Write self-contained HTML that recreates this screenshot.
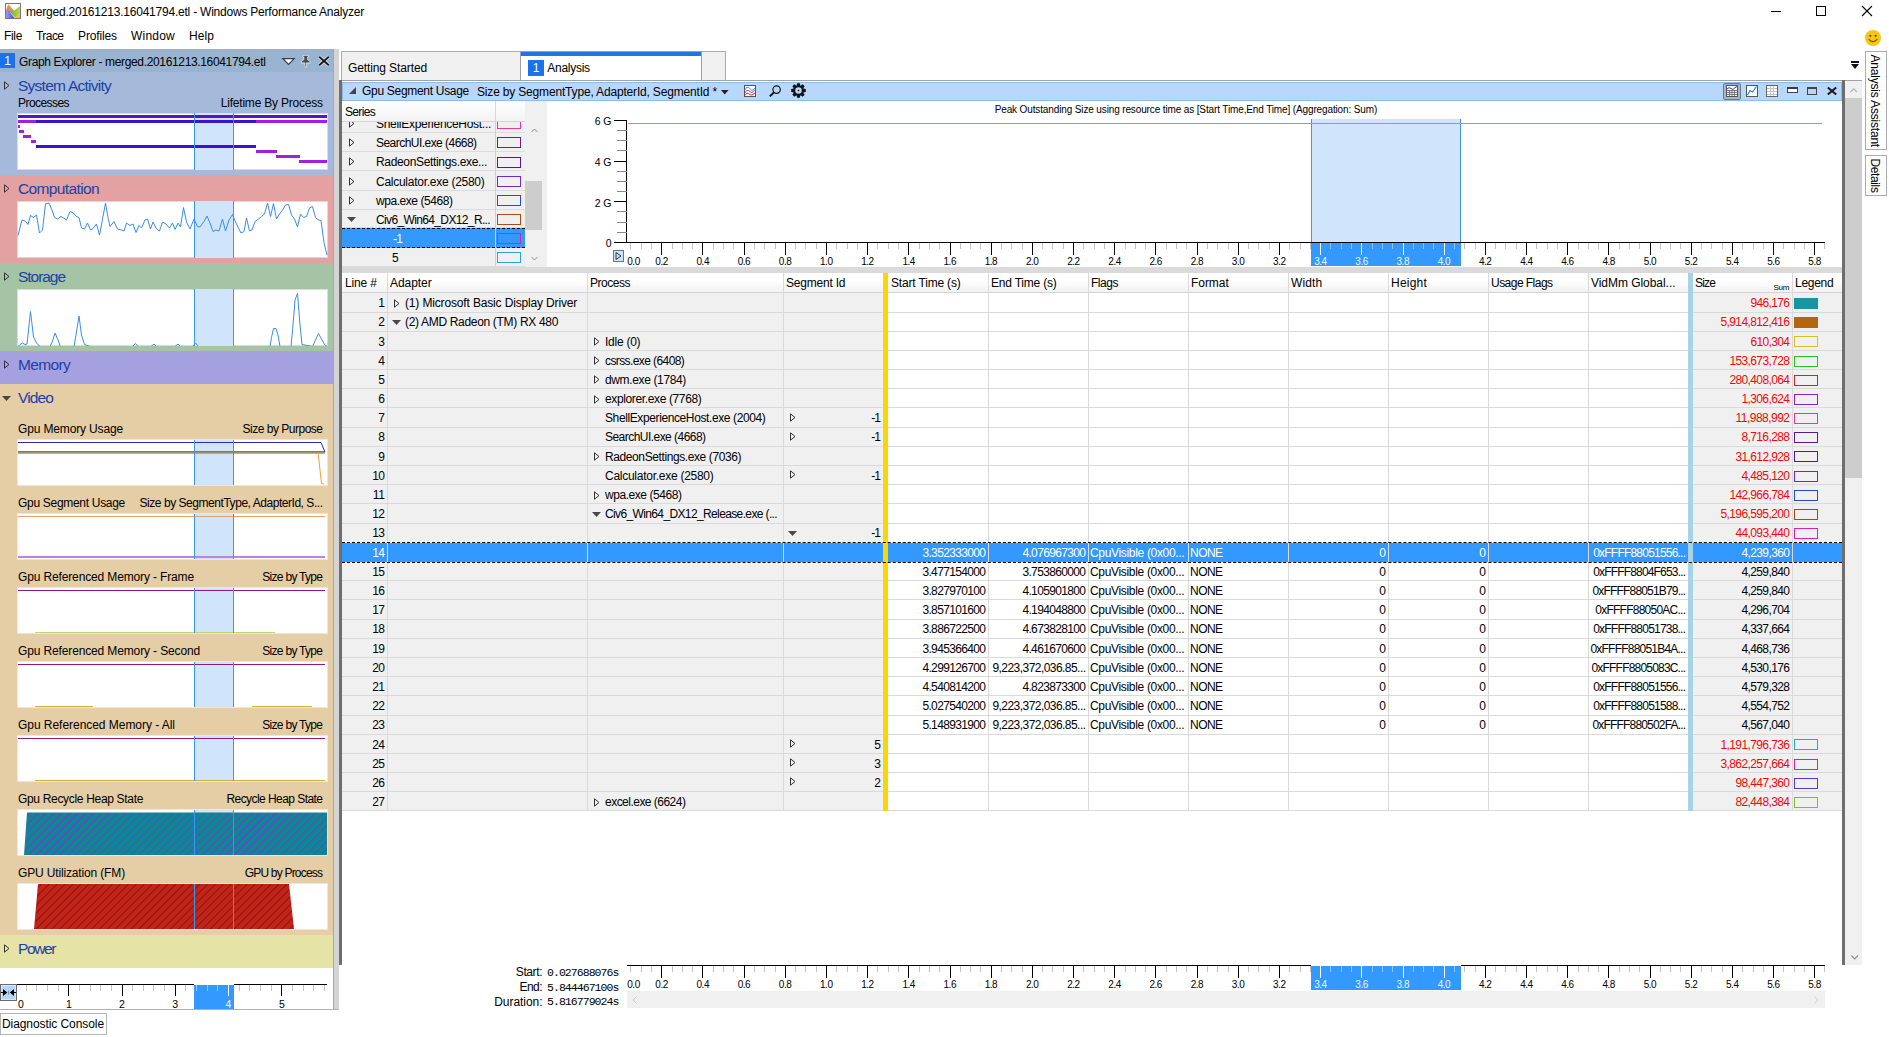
<!DOCTYPE html>
<html><head><meta charset="utf-8"><title>merged.20161213.16041794.etl - Windows Performance Analyzer</title>
<style>
html,body{margin:0;padding:0;background:#fff;}
html{overflow:hidden;width:1889px;height:1037px;}
body{width:1889px;height:1037px;position:relative;overflow:hidden;font-family:"Liberation Sans",sans-serif;font-size:12px;color:#000;}
div{position:absolute;box-sizing:border-box;}
svg{position:absolute;overflow:visible;}
.t{white-space:nowrap;}
.mono{font-family:"Liberation Mono",monospace;}
</style></head><body>

<svg style="left:5px;top:3px" width="16" height="16" viewBox="0 0 16 16">
<defs><linearGradient id="ib" x1="0" x2="1"><stop offset="0" stop-color="#9a9aff"/><stop offset="1" stop-color="#4a4ad0"/></linearGradient>
<linearGradient id="ig" x1="0" x2="1"><stop offset="0" stop-color="#7aa838"/><stop offset="1" stop-color="#b0dc50"/></linearGradient></defs>
<rect x="0.5" y="0.5" width="15" height="15" fill="#fff" stroke="#777"/>
<path d="M1 7L3.2 1.2L9.5 8L1 11Z" fill="#e09450"/>
<path d="M15 3L9 7.8L4.2 8L10 14.5L15 10.5Z" fill="url(#ig)"/>
<path d="M15 10.5L9 15L15 15Z" fill="#f0c030"/>
<path d="M1 15L1 8L2.5 6L9.5 15Z" fill="url(#ib)"/>
</svg>
<div class="t title" style="top:4.00px;height:16px;line-height:16px;font-size:12px;letter-spacing:-0.218px;left:26px;">merged.20161213.16041794.etl - Windows Performance Analyzer</div>
<div style="left:1771px;top:11px;width:10px;height:1px;background:#000;"></div>
<div style="left:1816px;top:6px;width:10px;height:10px;border:1px solid #000;"></div>
<svg style="left:1862px;top:6px" width="10" height="10" viewBox="0 0 10 10"><path d="M0 0L10 10M10 0L0 10" stroke="#000" stroke-width="1.1" fill="none"/></svg>
<div class="t menu" style="top:27.50px;height:16px;line-height:16px;font-size:12px;letter-spacing:-0.334px;left:4px;">File</div>
<div class="t menu" style="top:27.50px;height:16px;line-height:16px;font-size:12px;letter-spacing:-0.546px;left:36px;">Trace</div>
<div class="t menu" style="top:27.50px;height:16px;line-height:16px;font-size:12px;letter-spacing:-0.127px;left:78px;">Profiles</div>
<div class="t menu" style="top:27.50px;height:16px;line-height:16px;font-size:12px;letter-spacing:0.22px;left:131px;">Window</div>
<div class="t menu" style="top:27.50px;height:16px;line-height:16px;font-size:12px;letter-spacing:0.08px;left:189px;">Help</div>
<svg style="left:1865px;top:30px" width="16" height="16" viewBox="0 0 16 16">
<circle cx="8" cy="8" r="8" fill="#f9c513"/>
<circle cx="5.3" cy="5.8" r="1.1" fill="#6b4e00"/><circle cx="10.7" cy="5.8" r="1.1" fill="#6b4e00"/>
<path d="M3.6 9.2Q8 14 12.4 9.2" stroke="#6b4e00" stroke-width="1.1" fill="none"/></svg>
<div style="left:0px;top:49px;width:333px;height:23px;background:#99b4d1;"></div>
<div style="left:0px;top:53px;width:15px;height:15px;background:#1a73e8;"></div>
<div class="t" style="top:52.50px;height:16px;line-height:16px;font-size:12px;color:#fff;letter-spacing:-0.674px;left:-292.84px;width:600px;text-align:center;">1</div>
<div class="t ge" style="top:53.50px;height:16px;line-height:16px;font-size:12px;letter-spacing:-0.349px;left:19px;">Graph Explorer - merged.20161213.16041794.etl</div>
<div style="left:0px;top:49px;width:333px;height:1px;background:#a9adb3;"></div>
<svg style="left:282px;top:58px" width="13" height="7" viewBox="0 0 13 7"><path d="M0.8 0.6H12.2L6.5 6.3Z" fill="#fff" stroke="#3a3a52" stroke-width="1.2" stroke-linejoin="miter"/></svg>
<svg style="left:300px;top:55px" width="11" height="13" viewBox="0 0 11 13"><path d="M3.5 0.8H8V1.8H7.2V4.8L9.8 6.8V7.6H6.1V11L5.7 12L5.3 11V7.6H1.6V6.8L4.3 4.8V1.8H3.5Z" fill="#4a4a4a" stroke="#dfe8f2" stroke-width="1.6" paint-order="stroke" stroke-linejoin="round"/></svg>
<svg style="left:318px;top:56px" width="12" height="10" viewBox="0 0 12 10"><path d="M1.2 0.8L10.8 9.2M10.8 0.8L1.2 9.2" stroke="#e4ecf4" stroke-width="3.4" fill="none"/><path d="M1.2 0.8L10.8 9.2M10.8 0.8L1.2 9.2" stroke="#1a1a1a" stroke-width="1.9" fill="none"/></svg>
<div style="left:0px;top:72px;width:333px;height:103px;background:#a5b9db;"></div>
<svg style="left:3.7px;top:81.1px" width="6" height="9" viewBox="0 0 6 9"><path d="M0.5 0.8L5 4.5L0.5 8.2Z" fill="none" stroke="#333" stroke-width="1"/></svg>
<div class="t sect" style="top:76.35px;height:19.5px;line-height:19.5px;font-size:15.5px;color:#1d40a8;letter-spacing:-0.748px;left:18px;">System Activity</div>
<div class="t" style="top:95.00px;height:16px;line-height:16px;font-size:12px;letter-spacing:-0.558px;left:18px;">Processes</div>
<div class="t" style="top:95.00px;height:16px;line-height:16px;font-size:12px;letter-spacing:-0.213px;right:1566.21px;text-align:right;">Lifetime By Process</div>
<div style="left:17px;top:113px;width:311px;height:57px;background:#fff;background-clip:padding-box;border:1px solid rgba(255,255,255,0.5);"></div>
<div style="left:194px;top:113px;width:40px;height:57px;background:#d0e5fc;"></div>
<div style="left:18px;top:115px;width:309px;height:3px;background:#5a12c4;"></div>
<div style="left:18px;top:120px;width:18px;height:3px;background:#a21fe0;"></div>
<div style="left:36px;top:120px;width:220px;height:3px;background:#3912d2;"></div>
<div style="left:256px;top:120px;width:71px;height:3px;background:#a21fe0;"></div>
<div style="left:18px;top:125px;width:2px;height:3px;background:#a21fe0;"></div>
<div style="left:19px;top:130px;width:5px;height:3px;background:#a21fe0;"></div>
<div style="left:23px;top:135px;width:8px;height:3px;background:#a21fe0;"></div>
<div style="left:31px;top:140px;width:5px;height:3px;background:#a21fe0;"></div>
<div style="left:36px;top:145px;width:220px;height:3px;background:#3912d2;"></div>
<div style="left:256px;top:150px;width:21px;height:3px;background:#a21fe0;"></div>
<div style="left:276px;top:155px;width:24px;height:3px;background:#a21fe0;"></div>
<div style="left:299px;top:160px;width:28px;height:3px;background:#a21fe0;"></div>
<div style="left:194px;top:113px;width:40px;height:57px;border-left:1px solid #3d96f0;border-right:1px solid #3d96f0;"></div>
<div style="left:0px;top:175px;width:333px;height:88px;background:#e3a1a1;"></div>
<svg style="left:3.7px;top:184.1px" width="6" height="9" viewBox="0 0 6 9"><path d="M0.5 0.8L5 4.5L0.5 8.2Z" fill="none" stroke="#333" stroke-width="1"/></svg>
<div class="t sect" style="top:179.35px;height:19.5px;line-height:19.5px;font-size:15.5px;color:#1d40a8;letter-spacing:-0.626px;left:18px;">Computation</div>
<div style="left:17px;top:201px;width:311px;height:57px;background:#fff;background-clip:padding-box;border:1px solid rgba(255,255,255,0.5);"></div>
<div style="left:194px;top:201px;width:40px;height:57px;background:#d0e5fc;"></div>
<svg style="left:0;top:0" width="334" height="300"><polyline points="18.0,235.5 22.0,220.0 25.5,221.2 28.0,224.5 30.5,215.5 33.5,217.5 36.5,215.0 39.5,233.0 42.5,230.0 45.5,203.8 49.0,203.0 52.0,210.0 54.5,217.5 57.5,219.0 61.0,216.5 63.5,218.0 66.5,220.0 70.0,211.5 73.5,213.0 76.5,216.5 79.0,217.5 81.5,228.0 84.5,229.0 87.5,223.0 90.5,230.0 93.5,228.0 96.5,224.0 99.5,235.0 103.0,216.5 105.5,203.0 108.0,217.5 110.0,226.5 114.0,221.5 117.5,229.0 121.5,230.0 124.0,231.0 126.5,223.0 130.0,225.5 133.0,224.0 136.0,232.5 139.0,225.5 141.5,228.0 145.0,220.0 147.5,219.0 150.5,229.0 153.0,222.0 156.5,229.0 159.5,231.0 162.5,222.0 166.0,224.0 169.5,228.0 172.5,223.0 175.0,229.5 178.0,223.0 180.5,227.0 183.5,207.5 186.5,222.0 190.0,229.0 194.0,219.0 197.5,226.5 200.0,227.0 204.0,221.5 207.0,216.0 210.0,223.0 213.0,231.5 216.0,230.0 219.0,231.0 222.5,219.0 225.5,231.0 229.0,220.0 232.5,214.5 235.5,222.0 239.0,229.0 241.0,233.0 244.0,231.5 246.5,218.0 249.5,231.0 252.0,230.0 255.0,221.5 258.5,219.0 261.5,216.5 264.5,214.0 267.5,203.0 270.5,216.5 273.5,203.5 276.5,219.0 279.5,214.0 282.5,210.0 285.5,205.0 288.5,204.5 291.5,215.0 294.5,219.0 297.5,227.0 300.5,214.0 303.5,217.5 306.5,216.5 309.5,208.0 312.5,206.5 315.5,217.5 318.5,220.0 321.0,220.5 324.0,242.5 327.0,255.0" fill="none" stroke="#3c8ce6" stroke-width="1"/></svg>
<div style="left:194px;top:201px;width:40px;height:57px;border-left:1px solid #3d96f0;border-right:1px solid #3d96f0;"></div>
<div style="left:0px;top:263px;width:333px;height:88px;background:#a5c3a5;"></div>
<svg style="left:3.7px;top:272.1px" width="6" height="9" viewBox="0 0 6 9"><path d="M0.5 0.8L5 4.5L0.5 8.2Z" fill="none" stroke="#333" stroke-width="1"/></svg>
<div class="t sect" style="top:267.35px;height:19.5px;line-height:19.5px;font-size:15.5px;color:#1d40a8;letter-spacing:-1.041px;left:18px;">Storage</div>
<div style="left:17px;top:289px;width:311px;height:57px;background:#fff;background-clip:padding-box;border:1px solid rgba(255,255,255,0.5);"></div>
<div style="left:194px;top:289px;width:40px;height:57px;background:#d0e5fc;"></div>
<svg style="left:17px;top:289px;overflow:hidden" width="311" height="57"><polyline points="1.0,57.5 3.0,55.5 5.5,54.0 8.0,55.5 10.0,55.0 13.5,22.5 16.5,48.0 19.5,54.0 23.0,57.5 33.0,57.5 35.0,53.5 38.0,44.0 41.0,51.0 43.5,57.5 57.0,57.5 59.0,46.0 62.0,27.0 64.5,46.0 67.5,55.5 73.0,57.5 115.5,57.5 118.5,54.5 121.0,57.5 134.0,57.5 137.0,55.0 139.5,57.5 158.0,57.5 161.0,55.0 163.5,57.5 175.5,57.5 178.5,54.0 181.5,57.5 253.0,57.5 254.5,48.5 256.5,39.5 259.0,39.5 261.0,46.0 263.0,57.5 274.0,57.5 276.0,36.0 278.0,11.0 280.5,4.5 283.0,36.0 285.0,55.5 295.5,57.5 298.5,51.0 301.5,44.5 304.5,50.0 307.5,55.5 310.0,57.5" fill="none" stroke="#3c8ce6" stroke-width="1"/></svg>
<div style="left:194px;top:289px;width:40px;height:57px;border-left:1px solid #3d96f0;border-right:1px solid #3d96f0;"></div>
<div style="left:0px;top:351px;width:333px;height:33px;background:#a5a1e1;"></div>
<svg style="left:3.7px;top:360.1px" width="6" height="9" viewBox="0 0 6 9"><path d="M0.5 0.8L5 4.5L0.5 8.2Z" fill="none" stroke="#333" stroke-width="1"/></svg>
<div class="t sect" style="top:355.35px;height:19.5px;line-height:19.5px;font-size:15.5px;color:#1d40a8;letter-spacing:-0.663px;left:18px;">Memory</div>
<div style="left:0px;top:384px;width:333px;height:551px;background:#e5cda5;"></div>
<svg style="left:2px;top:395.5px" width="9" height="5" viewBox="0 0 9 5"><path d="M0 0H9L4.5 5Z" fill="#484848"/></svg>
<div class="t sect" style="top:388.35px;height:19.5px;line-height:19.5px;font-size:15.5px;color:#1d40a8;letter-spacing:-0.873px;left:18px;">Video</div>
<div class="t" style="top:421.40px;height:16px;line-height:16px;font-size:12px;letter-spacing:-0.148px;left:18px;">Gpu Memory Usage</div>
<div class="t" style="top:421.40px;height:16px;line-height:16px;font-size:12px;letter-spacing:-0.492px;right:1566.49px;text-align:right;">Size by Purpose</div>
<div style="left:17px;top:439px;width:311px;height:47px;background:#fff;background-clip:padding-box;border:1px solid rgba(255,255,255,0.5);"></div>
<div style="left:194px;top:440px;width:40px;height:45px;background:#d0e5fc;"></div>
<svg style="left:0;top:440px" width="334" height="45"><polyline points="18,12.9 325,12.9" fill="none" stroke="#a0946c" stroke-width="1.7"/><polyline points="18,11.5 325,11.5" fill="none" stroke="#2a9a9a" stroke-width="1.2"/><polyline points="18,2.5 321,2.5 325,12" fill="none" stroke="#2a2ab8" stroke-width="1"/><polyline points="318,12 321.5,43.5 324,44" fill="none" stroke="#f0a030" stroke-width="1"/></svg>
<div style="left:194px;top:440px;width:40px;height:45px;border-left:1px solid #3d96f0;border-right:1px solid #3d96f0;"></div>
<div class="t" style="top:495.40px;height:16px;line-height:16px;font-size:12px;letter-spacing:-0.298px;left:18px;">Gpu Segment Usage</div>
<div class="t" style="top:495.40px;height:16px;line-height:16px;font-size:12px;letter-spacing:-0.457px;right:1566.46px;text-align:right;">Size by SegmentType, AdapterId, S...</div>
<div style="left:17px;top:513px;width:311px;height:47px;background:#fff;background-clip:padding-box;border:1px solid rgba(255,255,255,0.5);"></div>
<div style="left:194px;top:514px;width:40px;height:45px;background:#d0e5fc;"></div>
<div style="left:18px;top:516px;width:307px;height:1px;background:#e8a468;"></div>
<div style="left:18px;top:556px;width:307px;height:1.5px;background:#c080e8;"></div>
<div style="left:194px;top:514px;width:40px;height:45px;border-left:1px solid #3d96f0;border-right:1px solid #3d96f0;"></div>
<div class="t" style="top:569.40px;height:16px;line-height:16px;font-size:12px;letter-spacing:-0.14px;left:18px;">Gpu Referenced Memory - Frame</div>
<div class="t" style="top:569.40px;height:16px;line-height:16px;font-size:12px;letter-spacing:-0.707px;right:1566.71px;text-align:right;">Size by Type</div>
<div style="left:17px;top:587px;width:311px;height:47px;background:#fff;background-clip:padding-box;border:1px solid rgba(255,255,255,0.5);"></div>
<div style="left:194px;top:588px;width:40px;height:45px;background:#d0e5fc;"></div>
<div style="left:18px;top:590px;width:307px;height:1px;background:#8a1a8a;"></div>
<div style="left:35px;top:632.4px;width:240px;height:0.6px;background:#b8d878;"></div>
<div style="left:194px;top:588px;width:40px;height:45px;border-left:1px solid #3d96f0;border-right:1px solid #3d96f0;"></div>
<div class="t" style="top:643.40px;height:16px;line-height:16px;font-size:12px;letter-spacing:-0.136px;left:18px;">Gpu Referenced Memory - Second</div>
<div class="t" style="top:643.40px;height:16px;line-height:16px;font-size:12px;letter-spacing:-0.707px;right:1566.71px;text-align:right;">Size by Type</div>
<div style="left:17px;top:661px;width:311px;height:47px;background:#fff;background-clip:padding-box;border:1px solid rgba(255,255,255,0.5);"></div>
<div style="left:194px;top:662px;width:40px;height:45px;background:#d0e5fc;"></div>
<div style="left:18px;top:664px;width:307px;height:1px;background:#8a1a8a;"></div>
<div style="left:35px;top:706.3px;width:58px;height:0.7px;background:#d0b040;"></div>
<div style="left:252px;top:706.3px;width:60px;height:0.7px;background:#d0b040;"></div>
<div style="left:194px;top:662px;width:40px;height:45px;border-left:1px solid #3d96f0;border-right:1px solid #3d96f0;"></div>
<div class="t" style="top:717.40px;height:16px;line-height:16px;font-size:12px;letter-spacing:-0.04px;left:18px;">Gpu Referenced Memory - All</div>
<div class="t" style="top:717.40px;height:16px;line-height:16px;font-size:12px;letter-spacing:-0.707px;right:1566.71px;text-align:right;">Size by Type</div>
<div style="left:17px;top:735px;width:311px;height:47px;background:#fff;background-clip:padding-box;border:1px solid rgba(255,255,255,0.5);"></div>
<div style="left:194px;top:736px;width:40px;height:45px;background:#d0e5fc;"></div>
<div style="left:18px;top:738px;width:307px;height:1px;background:#8a1a8a;"></div>
<div style="left:35px;top:780.3px;width:290px;height:0.7px;background:#d0b040;"></div>
<div style="left:194px;top:736px;width:40px;height:45px;border-left:1px solid #3d96f0;border-right:1px solid #3d96f0;"></div>
<div class="t" style="top:791.40px;height:16px;line-height:16px;font-size:12px;letter-spacing:-0.321px;left:18px;">Gpu Recycle Heap State</div>
<div class="t" style="top:791.40px;height:16px;line-height:16px;font-size:12px;letter-spacing:-0.559px;right:1566.56px;text-align:right;">Recycle Heap State</div>
<div style="left:17px;top:809px;width:311px;height:47px;background:#fff;background-clip:padding-box;border:1px solid rgba(255,255,255,0.5);"></div>
<div style="left:194px;top:810px;width:40px;height:45px;background:#d0e5fc;"></div>
<svg style="left:17px;top:810px" width="311" height="45"><defs><pattern id="h1" width="5.6" height="5.6" patternUnits="userSpaceOnUse" patternTransform="rotate(45)"><rect width="5.6" height="5.6" fill="#058c8c"/><rect width="1" height="5.6" fill="#8a2be2"/></pattern></defs><polygon points="7,45 10,2.5 310,2.5 310,45" fill="url(#h1)"/></svg>
<div style="left:194px;top:810px;width:40px;height:45px;border-left:1px solid #3d96f0;border-right:1px solid #3d96f0;"></div>
<div class="t" style="top:865.40px;height:16px;line-height:16px;font-size:12px;letter-spacing:-0.151px;left:18px;">GPU Utilization (FM)</div>
<div class="t" style="top:865.40px;height:16px;line-height:16px;font-size:12px;letter-spacing:-0.8px;right:1566.8px;text-align:right;">GPU by Process</div>
<div style="left:17px;top:883px;width:311px;height:47px;background:#fff;background-clip:padding-box;border:1px solid rgba(255,255,255,0.5);"></div>
<div style="left:194px;top:884px;width:40px;height:45px;background:#d0e5fc;"></div>
<svg style="left:17px;top:884px" width="311" height="45"><defs><pattern id="h2" width="5.6" height="5.6" patternUnits="userSpaceOnUse" patternTransform="rotate(45)"><rect width="5.6" height="5.6" fill="#c22418"/><rect width="1" height="5.6" fill="#8a1212"/></pattern></defs><polygon points="17,45 21,0 272,0 277,45" fill="url(#h2)"/></svg>
<div style="left:194px;top:884px;width:40px;height:45px;border-left:1px solid #3d96f0;border-right:1px solid #3d96f0;"></div>
<div style="left:0px;top:935px;width:333px;height:33px;background:#e5e3a5;"></div>
<svg style="left:3.7px;top:944.1px" width="6" height="9" viewBox="0 0 6 9"><path d="M0.5 0.8L5 4.5L0.5 8.2Z" fill="none" stroke="#333" stroke-width="1"/></svg>
<div class="t sect" style="top:939.35px;height:19.5px;line-height:19.5px;font-size:15.5px;color:#1d40a8;letter-spacing:-1.387px;left:18px;">Power</div>
<div style="left:0px;top:984px;width:17px;height:17px;background:#b5d5fb;border:1px solid #6a6a6a;box-shadow:inset 0 0 0 1px #d8e8fc;"></div>
<svg style="left:0px;top:984px" width="17" height="17" viewBox="0 0 17 17"><path d="M3 5L7.3 8.5L3 12ZM14 5L9.8 8.5L14 12Z" fill="#000"/><path d="M1 8.5H4M13 8.5H16" stroke="#000" stroke-width="1.2" fill="none"/><path d="M8.5 6.5V10.5" stroke="#777" stroke-width="0.8"/></svg>
<div style="left:194px;top:985px;width:40px;height:24px;background:#3399ff;"></div>
<svg shape-rendering="crispEdges" style="left:0;top:0" width="334" height="1037"><line x1="26.5" y1="985" x2="26.5" y2="991" stroke="#c4c4c4" stroke-width="1"/><line x1="36.5" y1="985" x2="36.5" y2="991" stroke="#c4c4c4" stroke-width="1"/><line x1="47.5" y1="985" x2="47.5" y2="991" stroke="#c4c4c4" stroke-width="1"/><line x1="58.5" y1="985" x2="58.5" y2="991" stroke="#c4c4c4" stroke-width="1"/><line x1="68.5" y1="984" x2="68.5" y2="996" stroke="#000" stroke-width="1"/><line x1="79.5" y1="985" x2="79.5" y2="991" stroke="#c4c4c4" stroke-width="1"/><line x1="90.5" y1="985" x2="90.5" y2="991" stroke="#c4c4c4" stroke-width="1"/><line x1="100.5" y1="985" x2="100.5" y2="991" stroke="#c4c4c4" stroke-width="1"/><line x1="111.5" y1="985" x2="111.5" y2="991" stroke="#c4c4c4" stroke-width="1"/><line x1="122.5" y1="984" x2="122.5" y2="996" stroke="#000" stroke-width="1"/><line x1="132.5" y1="985" x2="132.5" y2="991" stroke="#c4c4c4" stroke-width="1"/><line x1="143.5" y1="985" x2="143.5" y2="991" stroke="#c4c4c4" stroke-width="1"/><line x1="153.5" y1="985" x2="153.5" y2="991" stroke="#c4c4c4" stroke-width="1"/><line x1="164.5" y1="985" x2="164.5" y2="991" stroke="#c4c4c4" stroke-width="1"/><line x1="175.5" y1="984" x2="175.5" y2="996" stroke="#000" stroke-width="1"/><line x1="185.5" y1="985" x2="185.5" y2="991" stroke="#c4c4c4" stroke-width="1"/><line x1="196.5" y1="985" x2="196.5" y2="991" stroke="#8cc4ff" stroke-width="1"/><line x1="207.5" y1="985" x2="207.5" y2="991" stroke="#8cc4ff" stroke-width="1"/><line x1="217.5" y1="985" x2="217.5" y2="991" stroke="#8cc4ff" stroke-width="1"/><line x1="228.5" y1="984" x2="228.5" y2="996" stroke="#fff" stroke-width="1"/><line x1="239.5" y1="985" x2="239.5" y2="991" stroke="#c4c4c4" stroke-width="1"/><line x1="249.5" y1="985" x2="249.5" y2="991" stroke="#c4c4c4" stroke-width="1"/><line x1="260.5" y1="985" x2="260.5" y2="991" stroke="#c4c4c4" stroke-width="1"/><line x1="271.5" y1="985" x2="271.5" y2="991" stroke="#c4c4c4" stroke-width="1"/><line x1="281.5" y1="984" x2="281.5" y2="996" stroke="#000" stroke-width="1"/><line x1="292.5" y1="985" x2="292.5" y2="991" stroke="#c4c4c4" stroke-width="1"/><line x1="303.5" y1="985" x2="303.5" y2="991" stroke="#c4c4c4" stroke-width="1"/><line x1="313.5" y1="985" x2="313.5" y2="991" stroke="#c4c4c4" stroke-width="1"/><line x1="324.5" y1="985" x2="324.5" y2="991" stroke="#c4c4c4" stroke-width="1"/><line x1="17" y1="984.5" x2="194" y2="984.5" stroke="#000" stroke-width="1"/><line x1="234" y1="984.5" x2="327" y2="984.5" stroke="#000" stroke-width="1"/></svg>
<div class="t ax" style="top:996.55px;height:14.5px;line-height:14.5px;font-size:10.5px;letter-spacing:-0.44px;left:18px;">0</div>
<div class="t ax" style="top:996.55px;height:14.5px;line-height:14.5px;font-size:10.5px;letter-spacing:-0.44px;left:-231.42px;width:600px;text-align:center;">1</div>
<div class="t ax" style="top:996.55px;height:14.5px;line-height:14.5px;font-size:10.5px;letter-spacing:-0.44px;left:-178.22px;width:600px;text-align:center;">2</div>
<div class="t ax" style="top:996.55px;height:14.5px;line-height:14.5px;font-size:10.5px;letter-spacing:-0.44px;left:-125.02px;width:600px;text-align:center;">3</div>
<div class="t ax" style="top:996.55px;height:14.5px;line-height:14.5px;font-size:10.5px;color:#fff;letter-spacing:-0.44px;left:-71.72px;width:600px;text-align:center;">4</div>
<div class="t ax" style="top:996.55px;height:14.5px;line-height:14.5px;font-size:10.5px;letter-spacing:-0.44px;left:-18.42px;width:600px;text-align:center;">5</div>
<div style="left:333px;top:49px;width:1px;height:961px;background:#a8a8a8;"></div>
<div style="left:334px;top:49px;width:5px;height:961px;background:#d4d4d4;"></div>
<div style="left:0px;top:1009px;width:339px;height:1px;background:#b0b0b0;"></div>
<div style="left:0px;top:1013px;width:107px;height:22px;border:1px solid #b4b4b4;background:#fff;"></div>
<div class="t dc" style="top:1016.00px;height:16px;line-height:16px;font-size:12px;letter-spacing:-0.077px;left:2px;">Diagnostic Console</div>
<div style="left:341px;top:51px;width:385px;height:30px;background:#f0f0f0;border:1px solid #acacac;"></div>
<div style="left:520px;top:51px;width:1px;height:30px;background:#acacac;"></div>
<div style="left:520px;top:51px;width:182px;height:30px;background:#fff;border:1px solid #a0a0a0;border-bottom:none;"></div>
<div style="left:521px;top:52px;width:180px;height:3.6px;background:#1e74e4;"></div>
<div class="t tab" style="top:59.90px;height:16px;line-height:16px;font-size:12px;letter-spacing:-0.114px;left:348px;">Getting Started</div>
<div style="left:528px;top:60px;width:16px;height:16px;background:#1a73e8;"></div>
<div class="t" style="top:60.00px;height:16px;line-height:16px;font-size:12px;color:#fff;letter-spacing:-0.674px;left:235.66px;width:600px;text-align:center;">1</div>
<div class="t tab" style="top:59.90px;height:16px;line-height:16px;font-size:12px;letter-spacing:-0.273px;left:547.3px;">Analysis</div>
<div style="left:339px;top:80px;width:1523px;height:1.2px;background:#a2a2a2;"></div>
<div style="left:339px;top:80px;width:3px;height:885px;background:#6e6e6e;"></div>
<div style="left:1842px;top:80px;width:3px;height:885px;background:#6e6e6e;"></div>
<div style="left:1845px;top:81.2px;width:17px;height:883.8px;background:#f0f0f0;"></div>
<div style="left:1845px;top:98px;width:17px;height:380px;background:#cdcdcd;"></div>
<svg style="left:1850.3px;top:87.5px" width="7.4" height="4.7" viewBox="0 0 7.4 4.7"><path d="M0.4 4.2L3.7 0.8L7 4.2" stroke="#b0b0b0" stroke-width="1.1" fill="none"/></svg>
<svg style="left:1850.5px;top:954.5px" width="7.4" height="4.7" viewBox="0 0 7.4 4.7"><path d="M0.4 0.5L3.7 3.9L7 0.5" stroke="#8a8a8a" stroke-width="1.1" fill="none"/></svg>
<div style="left:342px;top:81.5px;width:1500px;height:19px;background:#b9d7fc;border:1px solid #8fbcf0;"></div>
<svg style="left:349px;top:87px" width="7" height="7" viewBox="0 0 7 7"><path d="M7 0V7H0Z" fill="#444"/></svg>
<div class="t hd1" style="top:83.00px;height:16px;line-height:16px;font-size:12px;letter-spacing:-0.298px;left:362px;">Gpu Segment Usage</div>
<div class="t hd2" style="top:83.50px;height:16px;line-height:16px;font-size:12px;letter-spacing:-0.174px;left:477px;">Size by SegmentType, AdapterId, SegmentId *</div>
<svg style="left:721px;top:89.7px" width="7.5" height="4.5" viewBox="0 0 7.5 4.5"><path d="M0 0H7.5L3.75 4.5Z" fill="#222"/></svg>
<svg style="left:744px;top:85px" width="12" height="12" viewBox="0 0 12 12"><rect x="0.5" y="0.5" width="11" height="11" fill="#fff" stroke="#555"/><path d="M1 5Q2.5 1 4.5 2.5T7.5 5T11 3" stroke="#20a0e8" fill="none" stroke-width="1"/><path d="M1 8Q2.5 4 4.5 5.5T7.5 7.5T11 4.5" stroke="#a040c0" fill="none" stroke-width="1"/><path d="M1 10.5Q2.5 7 4.5 8.5T7.5 10T11 8" stroke="#f01818" fill="none" stroke-width="1"/></svg>
<svg style="left:769px;top:84px" width="13" height="13" viewBox="0 0 13 13"><circle cx="7.6" cy="5.6" r="3.7" fill="none" stroke="#111" stroke-width="1.2"/><path d="M4.9 8.4L0.8 12.4" stroke="#111" stroke-width="2"/></svg>
<svg style="left:790.8px;top:83.3px" width="15" height="15" viewBox="-7.5 -7.5 15 15"><path d="M-1.4 -7.3H1.4L1.9 -4.6H-1.9Z" fill="#111" transform="rotate(0)"/><path d="M-1.4 -7.3H1.4L1.9 -4.6H-1.9Z" fill="#111" transform="rotate(45)"/><path d="M-1.4 -7.3H1.4L1.9 -4.6H-1.9Z" fill="#111" transform="rotate(90)"/><path d="M-1.4 -7.3H1.4L1.9 -4.6H-1.9Z" fill="#111" transform="rotate(135)"/><path d="M-1.4 -7.3H1.4L1.9 -4.6H-1.9Z" fill="#111" transform="rotate(180)"/><path d="M-1.4 -7.3H1.4L1.9 -4.6H-1.9Z" fill="#111" transform="rotate(225)"/><path d="M-1.4 -7.3H1.4L1.9 -4.6H-1.9Z" fill="#111" transform="rotate(270)"/><path d="M-1.4 -7.3H1.4L1.9 -4.6H-1.9Z" fill="#111" transform="rotate(315)"/><circle r="4.25" fill="none" stroke="#111" stroke-width="2"/><path d="M0 -1L1 0L0 1L-1 0Z" fill="#111"/></svg>
<div style="left:1723px;top:82.5px;width:18px;height:17px;background:#a4b8d2;border:1.5px solid #727880;border-radius:2px;"></div>
<svg style="left:1726px;top:85px" width="12" height="12" viewBox="0 0 12 12"><rect x="0.5" y="0.5" width="11" height="11" fill="#fff" stroke="#555"/><path d="M1 4Q3 1.5 5 3.5T8.5 3L11 1.5" stroke="#2a3ad8" fill="none" stroke-width="1"/><rect x="1" y="5" width="10" height="6" fill="#fff"/><path d="M1 5.5H11M1 7.5H11M1 9.5H11M3.5 5.5V11M6 5.5V11M8.5 5.5V11" stroke="#777" stroke-width="1" fill="none"/></svg>
<svg style="left:1746px;top:85px" width="12" height="12" viewBox="0 0 12 12"><rect x="0.5" y="0.5" width="11" height="11" fill="#fff" stroke="#555"/><path d="M1.5 10L4 5.5L6.5 7L10.5 1.5" stroke="#1a8ae0" fill="none" stroke-width="1.2"/></svg>
<svg style="left:1766px;top:85px" width="12" height="12" viewBox="0 0 12 12"><rect x="0.5" y="0.5" width="11" height="11" fill="#fff" stroke="#666"/><path d="M1 3.5H11M1 6.5H11M1 9.5H11M4.5 1V11M7.5 1V11" stroke="#c4c4c4" stroke-width="1" fill="none" shape-rendering="crispEdges"/></svg>
<div style="left:1787px;top:87px;width:11px;height:5.5px;border:1px solid #444;border-top:2px solid #3a3a4a;background:#fff;"></div>
<div style="left:1807px;top:87px;width:10px;height:8px;border:1px solid #444;border-top:2px solid #444;background:#b9d7fc;"></div>
<svg style="left:1827px;top:87px" width="10" height="8" viewBox="0 0 10 8"><path d="M0.8 0.5L9.2 7.5M9.2 0.5L0.8 7.5" stroke="#1a1a1a" stroke-width="2.1" fill="none"/></svg>
<div style="left:1851px;top:61px;width:8px;height:2px;background:#111;"></div>
<svg style="left:1851px;top:64px" width="8" height="5" viewBox="0 0 8 5"><path d="M0 0H8L4 5Z" fill="#111"/></svg>
<div style="left:342px;top:100.5px;width:205px;height:166.5px;background:#f0f0f0;"></div>
<div style="left:342px;top:131.5px;width:183px;height:1px;background:#dcdcdc;"></div>
<div style="left:495px;top:113.5px;width:1px;height:19.0px;background:#d0d0d0;"></div>
<svg style="left:349px;top:118.6px" width="6" height="9" viewBox="0 0 6 9"><path d="M0.5 0.8L5 4.5L0.5 8.2Z" fill="none" stroke="#333" stroke-width="1"/></svg>
<div class="t ser" style="top:115.60px;height:16px;line-height:16px;font-size:12px;letter-spacing:-0.291px;left:376px;">ShellExperienceHost...</div>
<div style="left:497px;top:118.1px;width:24px;height:11px;border:1px solid #e8389c;"></div>
<div style="left:342px;top:151px;width:183px;height:1px;background:#dcdcdc;"></div>
<div style="left:495px;top:132.5px;width:1px;height:19.5px;background:#d0d0d0;"></div>
<svg style="left:349px;top:137.85px" width="6" height="9" viewBox="0 0 6 9"><path d="M0.5 0.8L5 4.5L0.5 8.2Z" fill="none" stroke="#333" stroke-width="1"/></svg>
<div class="t ser" style="top:134.85px;height:16px;line-height:16px;font-size:12px;letter-spacing:-0.538px;left:376px;">SearchUI.exe (4668)</div>
<div style="left:497px;top:137.35px;width:24px;height:11px;border:1px solid #6a1aa8;"></div>
<div style="left:342px;top:170.3px;width:183px;height:1px;background:#dcdcdc;"></div>
<div style="left:495px;top:152px;width:1px;height:19.30000000000001px;background:#d0d0d0;"></div>
<svg style="left:349px;top:157.25px" width="6" height="9" viewBox="0 0 6 9"><path d="M0.5 0.8L5 4.5L0.5 8.2Z" fill="none" stroke="#333" stroke-width="1"/></svg>
<div class="t ser" style="top:154.25px;height:16px;line-height:16px;font-size:12px;letter-spacing:-0.337px;left:376px;">RadeonSettings.exe...</div>
<div style="left:497px;top:156.75px;width:24px;height:11px;border:1px solid #4a1ab0;"></div>
<div style="left:342px;top:189.75px;width:183px;height:1px;background:#dcdcdc;"></div>
<div style="left:495px;top:171.3px;width:1px;height:19.44999999999999px;background:#d0d0d0;"></div>
<svg style="left:349px;top:176.625px" width="6" height="9" viewBox="0 0 6 9"><path d="M0.5 0.8L5 4.5L0.5 8.2Z" fill="none" stroke="#333" stroke-width="1"/></svg>
<div class="t ser" style="top:173.62px;height:16px;line-height:16px;font-size:12px;letter-spacing:-0.265px;left:376px;">Calculator.exe (2580)</div>
<div style="left:497px;top:176.125px;width:24px;height:11px;border:1px solid #6a2ad8;"></div>
<div style="left:342px;top:209px;width:183px;height:1px;background:#dcdcdc;"></div>
<div style="left:495px;top:190.75px;width:1px;height:19.25px;background:#d0d0d0;"></div>
<svg style="left:349px;top:195.975px" width="6" height="9" viewBox="0 0 6 9"><path d="M0.5 0.8L5 4.5L0.5 8.2Z" fill="none" stroke="#333" stroke-width="1"/></svg>
<div class="t ser" style="top:192.97px;height:16px;line-height:16px;font-size:12px;letter-spacing:-0.444px;left:376px;">wpa.exe (5468)</div>
<div style="left:497px;top:195.475px;width:24px;height:11px;border:1px solid #2a48d8;"></div>
<div style="left:342px;top:227.2px;width:183px;height:1px;background:#dcdcdc;"></div>
<div style="left:495px;top:210px;width:1px;height:18.19999999999999px;background:#d0d0d0;"></div>
<svg style="left:347px;top:217.2px" width="9" height="5" viewBox="0 0 9 5"><path d="M0 0H9L4.5 5Z" fill="#484848"/></svg>
<div class="t ser" style="top:211.70px;height:16px;line-height:16px;font-size:12px;letter-spacing:-0.636px;left:376px;">Civ6_Win64_DX12_R...</div>
<div style="left:497px;top:214.2px;width:24px;height:11px;border:1px solid #b04a18;"></div>
<div style="left:342px;top:228.2px;width:183px;height:19.400000000000006px;background:#3399ff;border-top:1px dashed #000;border-bottom:1px dashed #000;"></div>
<div style="left:495px;top:228.2px;width:1px;height:19.400000000000006px;background:#d0d0d0;"></div>
<div class="t ser" style="top:230.50px;height:16px;line-height:16px;font-size:12px;color:#fff;letter-spacing:-0.835px;left:393px;">-1</div>
<div style="left:497px;top:232.99999999999997px;width:24px;height:11px;border:1px solid #e020a8;"></div>
<div style="left:342px;top:265.5px;width:183px;height:1px;background:#dcdcdc;"></div>
<div style="left:495px;top:247.6px;width:1px;height:18.900000000000006px;background:#d0d0d0;"></div>
<div class="t ser" style="top:249.65px;height:16px;line-height:16px;font-size:12px;letter-spacing:-0.674px;left:392px;">5</div>
<div style="left:497px;top:252.15000000000003px;width:24px;height:11px;border:1px solid #28a8d8;"></div>
<div style="left:342px;top:100.5px;width:183px;height:21px;background:linear-gradient(#fff,#f3f3f3);border-bottom:1px solid #d5d5d5;"></div>
<div style="left:495px;top:100.5px;width:1px;height:21px;background:#d8d8d8;"></div>
<div class="t ser" style="top:104.00px;height:16px;line-height:16px;font-size:12px;letter-spacing:-0.669px;left:345px;">Series</div>
<div style="left:525px;top:181px;width:16.7px;height:49px;background:#cdcdcd;"></div>
<svg style="left:531px;top:128px" width="7" height="5" viewBox="0 0 7 5"><path d="M0.5 4L3.5 1L6.5 4" stroke="#8a8a8a" stroke-width="1" fill="none"/></svg>
<svg style="left:531px;top:256px" width="7" height="5" viewBox="0 0 7 5"><path d="M0.5 1L3.5 4L6.5 1" stroke="#909090" stroke-width="1" fill="none"/></svg>
<div class="t cap" style="top:103.00px;height:14px;line-height:14px;font-size:10px;letter-spacing:-0.13px;left:885.93px;width:600px;text-align:center;">Peak Outstanding Size using resource time as [Start Time,End Time] (Aggregation: Sum)</div>
<svg shape-rendering="crispEdges" style="left:0;top:0" width="1889" height="300"><rect x="1311" y="119" width="150" height="124" fill="#d0e5fc"/><rect x="1311" y="243" width="150" height="23" fill="#3399ff"/><line x1="1311.5" y1="119" x2="1311.5" y2="243" stroke="#3d96f0"/><line x1="1460.5" y1="119" x2="1460.5" y2="243" stroke="#3d96f0"/><line x1="626.5" y1="119.5" x2="626.5" y2="243" stroke="#000" stroke-width="1"/><line x1="614" y1="120.5" x2="627" y2="120.5" stroke="#000" stroke-width="1"/><line x1="617" y1="130.5" x2="627" y2="130.5" stroke="#8a8a8a" stroke-width="1"/><line x1="617" y1="140.5" x2="627" y2="140.5" stroke="#8a8a8a" stroke-width="1"/><line x1="617" y1="150.5" x2="627" y2="150.5" stroke="#8a8a8a" stroke-width="1"/><line x1="614" y1="161.5" x2="627" y2="161.5" stroke="#000" stroke-width="1"/><line x1="617" y1="171.5" x2="627" y2="171.5" stroke="#8a8a8a" stroke-width="1"/><line x1="617" y1="181.5" x2="627" y2="181.5" stroke="#8a8a8a" stroke-width="1"/><line x1="617" y1="191.5" x2="627" y2="191.5" stroke="#8a8a8a" stroke-width="1"/><line x1="614" y1="201.5" x2="627" y2="201.5" stroke="#000" stroke-width="1"/><line x1="617" y1="211.5" x2="627" y2="211.5" stroke="#8a8a8a" stroke-width="1"/><line x1="617" y1="222.5" x2="627" y2="222.5" stroke="#8a8a8a" stroke-width="1"/><line x1="617" y1="232.5" x2="627" y2="232.5" stroke="#8a8a8a" stroke-width="1"/><line x1="614" y1="242.5" x2="627" y2="242.5" stroke="#000" stroke-width="1"/><line x1="627.5" y1="123.7" x2="1822" y2="123.7" stroke="#dc8c42" stroke-width="1.2"/><line x1="626" y1="242.5" x2="1824.5" y2="242.5" stroke="#000"/><line x1="1824.5" y1="243.0" x2="1824.5" y2="249.0" stroke="#c4c4c4"/><line x1="630.5" y1="243.0" x2="630.5" y2="249.0" stroke="#c4c4c4"/><line x1="641.5" y1="243.0" x2="641.5" y2="249.0" stroke="#c4c4c4"/><line x1="651.5" y1="243.0" x2="651.5" y2="249.0" stroke="#c4c4c4"/><line x1="661.5" y1="243.0" x2="661.5" y2="255.0" stroke="#000"/><line x1="672.5" y1="243.0" x2="672.5" y2="249.0" stroke="#c4c4c4"/><line x1="682.5" y1="243.0" x2="682.5" y2="249.0" stroke="#c4c4c4"/><line x1="692.5" y1="243.0" x2="692.5" y2="249.0" stroke="#c4c4c4"/><line x1="702.5" y1="243.0" x2="702.5" y2="255.0" stroke="#000"/><line x1="713.5" y1="243.0" x2="713.5" y2="249.0" stroke="#c4c4c4"/><line x1="723.5" y1="243.0" x2="723.5" y2="249.0" stroke="#c4c4c4"/><line x1="733.5" y1="243.0" x2="733.5" y2="249.0" stroke="#c4c4c4"/><line x1="744.5" y1="243.0" x2="744.5" y2="255.0" stroke="#000"/><line x1="754.5" y1="243.0" x2="754.5" y2="249.0" stroke="#c4c4c4"/><line x1="764.5" y1="243.0" x2="764.5" y2="249.0" stroke="#c4c4c4"/><line x1="775.5" y1="243.0" x2="775.5" y2="249.0" stroke="#c4c4c4"/><line x1="785.5" y1="243.0" x2="785.5" y2="255.0" stroke="#000"/><line x1="795.5" y1="243.0" x2="795.5" y2="249.0" stroke="#c4c4c4"/><line x1="805.5" y1="243.0" x2="805.5" y2="249.0" stroke="#c4c4c4"/><line x1="816.5" y1="243.0" x2="816.5" y2="249.0" stroke="#c4c4c4"/><line x1="826.5" y1="243.0" x2="826.5" y2="255.0" stroke="#000"/><line x1="836.5" y1="243.0" x2="836.5" y2="249.0" stroke="#c4c4c4"/><line x1="847.5" y1="243.0" x2="847.5" y2="249.0" stroke="#c4c4c4"/><line x1="857.5" y1="243.0" x2="857.5" y2="249.0" stroke="#c4c4c4"/><line x1="867.5" y1="243.0" x2="867.5" y2="255.0" stroke="#000"/><line x1="877.5" y1="243.0" x2="877.5" y2="249.0" stroke="#c4c4c4"/><line x1="888.5" y1="243.0" x2="888.5" y2="249.0" stroke="#c4c4c4"/><line x1="898.5" y1="243.0" x2="898.5" y2="249.0" stroke="#c4c4c4"/><line x1="908.5" y1="243.0" x2="908.5" y2="255.0" stroke="#000"/><line x1="919.5" y1="243.0" x2="919.5" y2="249.0" stroke="#c4c4c4"/><line x1="929.5" y1="243.0" x2="929.5" y2="249.0" stroke="#c4c4c4"/><line x1="939.5" y1="243.0" x2="939.5" y2="249.0" stroke="#c4c4c4"/><line x1="950.5" y1="243.0" x2="950.5" y2="255.0" stroke="#000"/><line x1="960.5" y1="243.0" x2="960.5" y2="249.0" stroke="#c4c4c4"/><line x1="970.5" y1="243.0" x2="970.5" y2="249.0" stroke="#c4c4c4"/><line x1="980.5" y1="243.0" x2="980.5" y2="249.0" stroke="#c4c4c4"/><line x1="991.5" y1="243.0" x2="991.5" y2="255.0" stroke="#000"/><line x1="1001.5" y1="243.0" x2="1001.5" y2="249.0" stroke="#c4c4c4"/><line x1="1011.5" y1="243.0" x2="1011.5" y2="249.0" stroke="#c4c4c4"/><line x1="1022.5" y1="243.0" x2="1022.5" y2="249.0" stroke="#c4c4c4"/><line x1="1032.5" y1="243.0" x2="1032.5" y2="255.0" stroke="#000"/><line x1="1042.5" y1="243.0" x2="1042.5" y2="249.0" stroke="#c4c4c4"/><line x1="1052.5" y1="243.0" x2="1052.5" y2="249.0" stroke="#c4c4c4"/><line x1="1063.5" y1="243.0" x2="1063.5" y2="249.0" stroke="#c4c4c4"/><line x1="1073.5" y1="243.0" x2="1073.5" y2="255.0" stroke="#000"/><line x1="1083.5" y1="243.0" x2="1083.5" y2="249.0" stroke="#c4c4c4"/><line x1="1094.5" y1="243.0" x2="1094.5" y2="249.0" stroke="#c4c4c4"/><line x1="1104.5" y1="243.0" x2="1104.5" y2="249.0" stroke="#c4c4c4"/><line x1="1114.5" y1="243.0" x2="1114.5" y2="255.0" stroke="#000"/><line x1="1125.5" y1="243.0" x2="1125.5" y2="249.0" stroke="#c4c4c4"/><line x1="1135.5" y1="243.0" x2="1135.5" y2="249.0" stroke="#c4c4c4"/><line x1="1145.5" y1="243.0" x2="1145.5" y2="249.0" stroke="#c4c4c4"/><line x1="1155.5" y1="243.0" x2="1155.5" y2="255.0" stroke="#000"/><line x1="1166.5" y1="243.0" x2="1166.5" y2="249.0" stroke="#c4c4c4"/><line x1="1176.5" y1="243.0" x2="1176.5" y2="249.0" stroke="#c4c4c4"/><line x1="1186.5" y1="243.0" x2="1186.5" y2="249.0" stroke="#c4c4c4"/><line x1="1197.5" y1="243.0" x2="1197.5" y2="255.0" stroke="#000"/><line x1="1207.5" y1="243.0" x2="1207.5" y2="249.0" stroke="#c4c4c4"/><line x1="1217.5" y1="243.0" x2="1217.5" y2="249.0" stroke="#c4c4c4"/><line x1="1228.5" y1="243.0" x2="1228.5" y2="249.0" stroke="#c4c4c4"/><line x1="1238.5" y1="243.0" x2="1238.5" y2="255.0" stroke="#000"/><line x1="1248.5" y1="243.0" x2="1248.5" y2="249.0" stroke="#c4c4c4"/><line x1="1258.5" y1="243.0" x2="1258.5" y2="249.0" stroke="#c4c4c4"/><line x1="1269.5" y1="243.0" x2="1269.5" y2="249.0" stroke="#c4c4c4"/><line x1="1279.5" y1="243.0" x2="1279.5" y2="255.0" stroke="#000"/><line x1="1289.5" y1="243.0" x2="1289.5" y2="249.0" stroke="#c4c4c4"/><line x1="1300.5" y1="243.0" x2="1300.5" y2="249.0" stroke="#c4c4c4"/><line x1="1310.5" y1="243.0" x2="1310.5" y2="249.0" stroke="#c4c4c4"/><line x1="1320.5" y1="243.0" x2="1320.5" y2="255.0" stroke="#fff"/><line x1="1330.5" y1="243.0" x2="1330.5" y2="249.0" stroke="#8cc4ff"/><line x1="1341.5" y1="243.0" x2="1341.5" y2="249.0" stroke="#8cc4ff"/><line x1="1351.5" y1="243.0" x2="1351.5" y2="249.0" stroke="#8cc4ff"/><line x1="1361.5" y1="243.0" x2="1361.5" y2="255.0" stroke="#fff"/><line x1="1372.5" y1="243.0" x2="1372.5" y2="249.0" stroke="#8cc4ff"/><line x1="1382.5" y1="243.0" x2="1382.5" y2="249.0" stroke="#8cc4ff"/><line x1="1392.5" y1="243.0" x2="1392.5" y2="249.0" stroke="#8cc4ff"/><line x1="1403.5" y1="243.0" x2="1403.5" y2="255.0" stroke="#fff"/><line x1="1413.5" y1="243.0" x2="1413.5" y2="249.0" stroke="#8cc4ff"/><line x1="1423.5" y1="243.0" x2="1423.5" y2="249.0" stroke="#8cc4ff"/><line x1="1433.5" y1="243.0" x2="1433.5" y2="249.0" stroke="#8cc4ff"/><line x1="1444.5" y1="243.0" x2="1444.5" y2="255.0" stroke="#fff"/><line x1="1454.5" y1="243.0" x2="1454.5" y2="249.0" stroke="#8cc4ff"/><line x1="1464.5" y1="243.0" x2="1464.5" y2="249.0" stroke="#c4c4c4"/><line x1="1475.5" y1="243.0" x2="1475.5" y2="249.0" stroke="#c4c4c4"/><line x1="1485.5" y1="243.0" x2="1485.5" y2="255.0" stroke="#000"/><line x1="1495.5" y1="243.0" x2="1495.5" y2="249.0" stroke="#c4c4c4"/><line x1="1505.5" y1="243.0" x2="1505.5" y2="249.0" stroke="#c4c4c4"/><line x1="1516.5" y1="243.0" x2="1516.5" y2="249.0" stroke="#c4c4c4"/><line x1="1526.5" y1="243.0" x2="1526.5" y2="255.0" stroke="#000"/><line x1="1536.5" y1="243.0" x2="1536.5" y2="249.0" stroke="#c4c4c4"/><line x1="1547.5" y1="243.0" x2="1547.5" y2="249.0" stroke="#c4c4c4"/><line x1="1557.5" y1="243.0" x2="1557.5" y2="249.0" stroke="#c4c4c4"/><line x1="1567.5" y1="243.0" x2="1567.5" y2="255.0" stroke="#000"/><line x1="1578.5" y1="243.0" x2="1578.5" y2="249.0" stroke="#c4c4c4"/><line x1="1588.5" y1="243.0" x2="1588.5" y2="249.0" stroke="#c4c4c4"/><line x1="1598.5" y1="243.0" x2="1598.5" y2="249.0" stroke="#c4c4c4"/><line x1="1608.5" y1="243.0" x2="1608.5" y2="255.0" stroke="#000"/><line x1="1619.5" y1="243.0" x2="1619.5" y2="249.0" stroke="#c4c4c4"/><line x1="1629.5" y1="243.0" x2="1629.5" y2="249.0" stroke="#c4c4c4"/><line x1="1639.5" y1="243.0" x2="1639.5" y2="249.0" stroke="#c4c4c4"/><line x1="1650.5" y1="243.0" x2="1650.5" y2="255.0" stroke="#000"/><line x1="1660.5" y1="243.0" x2="1660.5" y2="249.0" stroke="#c4c4c4"/><line x1="1670.5" y1="243.0" x2="1670.5" y2="249.0" stroke="#c4c4c4"/><line x1="1680.5" y1="243.0" x2="1680.5" y2="249.0" stroke="#c4c4c4"/><line x1="1691.5" y1="243.0" x2="1691.5" y2="255.0" stroke="#000"/><line x1="1701.5" y1="243.0" x2="1701.5" y2="249.0" stroke="#c4c4c4"/><line x1="1711.5" y1="243.0" x2="1711.5" y2="249.0" stroke="#c4c4c4"/><line x1="1722.5" y1="243.0" x2="1722.5" y2="249.0" stroke="#c4c4c4"/><line x1="1732.5" y1="243.0" x2="1732.5" y2="255.0" stroke="#000"/><line x1="1742.5" y1="243.0" x2="1742.5" y2="249.0" stroke="#c4c4c4"/><line x1="1753.5" y1="243.0" x2="1753.5" y2="249.0" stroke="#c4c4c4"/><line x1="1763.5" y1="243.0" x2="1763.5" y2="249.0" stroke="#c4c4c4"/><line x1="1773.5" y1="243.0" x2="1773.5" y2="255.0" stroke="#000"/><line x1="1783.5" y1="243.0" x2="1783.5" y2="249.0" stroke="#c4c4c4"/><line x1="1794.5" y1="243.0" x2="1794.5" y2="249.0" stroke="#c4c4c4"/><line x1="1804.5" y1="243.0" x2="1804.5" y2="249.0" stroke="#c4c4c4"/><line x1="1814.5" y1="243.0" x2="1814.5" y2="255.0" stroke="#000"/></svg>
<div class="t ax" style="top:114.05px;height:14.5px;line-height:14.5px;font-size:10.5px;letter-spacing:-0.041px;right:1277.54px;text-align:right;">6 G</div>
<div class="t ax" style="top:155.05px;height:14.5px;line-height:14.5px;font-size:10.5px;letter-spacing:-0.041px;right:1277.54px;text-align:right;">4 G</div>
<div class="t ax" style="top:195.55px;height:14.5px;line-height:14.5px;font-size:10.5px;letter-spacing:-0.041px;right:1277.54px;text-align:right;">2 G</div>
<div class="t ax" style="top:236.05px;height:14.5px;line-height:14.5px;font-size:10.5px;letter-spacing:-0.409px;right:1277.91px;text-align:right;">0</div>
<div class="t ax" style="top:255.00px;height:14px;line-height:14px;font-size:10px;letter-spacing:-0.501px;left:627.3px;">0.0</div>
<div class="t ax" style="top:255.00px;height:14px;line-height:14px;font-size:10px;letter-spacing:-0.501px;left:361.55px;width:600px;text-align:center;">0.2</div>
<div class="t ax" style="top:255.00px;height:14px;line-height:14px;font-size:10px;letter-spacing:-0.501px;left:402.75px;width:600px;text-align:center;">0.4</div>
<div class="t ax" style="top:255.00px;height:14px;line-height:14px;font-size:10px;letter-spacing:-0.501px;left:443.85px;width:600px;text-align:center;">0.6</div>
<div class="t ax" style="top:255.00px;height:14px;line-height:14px;font-size:10px;letter-spacing:-0.501px;left:485.05px;width:600px;text-align:center;">0.8</div>
<div class="t ax" style="top:255.00px;height:14px;line-height:14px;font-size:10px;letter-spacing:-0.501px;left:526.25px;width:600px;text-align:center;">1.0</div>
<div class="t ax" style="top:255.00px;height:14px;line-height:14px;font-size:10px;letter-spacing:-0.501px;left:567.45px;width:600px;text-align:center;">1.2</div>
<div class="t ax" style="top:255.00px;height:14px;line-height:14px;font-size:10px;letter-spacing:-0.501px;left:608.65px;width:600px;text-align:center;">1.4</div>
<div class="t ax" style="top:255.00px;height:14px;line-height:14px;font-size:10px;letter-spacing:-0.501px;left:649.75px;width:600px;text-align:center;">1.6</div>
<div class="t ax" style="top:255.00px;height:14px;line-height:14px;font-size:10px;letter-spacing:-0.501px;left:690.95px;width:600px;text-align:center;">1.8</div>
<div class="t ax" style="top:255.00px;height:14px;line-height:14px;font-size:10px;letter-spacing:-0.501px;left:732.15px;width:600px;text-align:center;">2.0</div>
<div class="t ax" style="top:255.00px;height:14px;line-height:14px;font-size:10px;letter-spacing:-0.501px;left:773.35px;width:600px;text-align:center;">2.2</div>
<div class="t ax" style="top:255.00px;height:14px;line-height:14px;font-size:10px;letter-spacing:-0.501px;left:814.55px;width:600px;text-align:center;">2.4</div>
<div class="t ax" style="top:255.00px;height:14px;line-height:14px;font-size:10px;letter-spacing:-0.501px;left:855.65px;width:600px;text-align:center;">2.6</div>
<div class="t ax" style="top:255.00px;height:14px;line-height:14px;font-size:10px;letter-spacing:-0.501px;left:896.85px;width:600px;text-align:center;">2.8</div>
<div class="t ax" style="top:255.00px;height:14px;line-height:14px;font-size:10px;letter-spacing:-0.501px;left:938.05px;width:600px;text-align:center;">3.0</div>
<div class="t ax" style="top:255.00px;height:14px;line-height:14px;font-size:10px;letter-spacing:-0.501px;left:979.25px;width:600px;text-align:center;">3.2</div>
<div class="t ax" style="top:255.00px;height:14px;line-height:14px;font-size:10px;color:#eef6ff;letter-spacing:-0.501px;left:1020.45px;width:600px;text-align:center;">3.4</div>
<div class="t ax" style="top:255.00px;height:14px;line-height:14px;font-size:10px;color:#eef6ff;letter-spacing:-0.501px;left:1061.55px;width:600px;text-align:center;">3.6</div>
<div class="t ax" style="top:255.00px;height:14px;line-height:14px;font-size:10px;color:#eef6ff;letter-spacing:-0.501px;left:1102.75px;width:600px;text-align:center;">3.8</div>
<div class="t ax" style="top:255.00px;height:14px;line-height:14px;font-size:10px;color:#eef6ff;letter-spacing:-0.501px;left:1143.95px;width:600px;text-align:center;">4.0</div>
<div class="t ax" style="top:255.00px;height:14px;line-height:14px;font-size:10px;letter-spacing:-0.501px;left:1185.15px;width:600px;text-align:center;">4.2</div>
<div class="t ax" style="top:255.00px;height:14px;line-height:14px;font-size:10px;letter-spacing:-0.501px;left:1226.35px;width:600px;text-align:center;">4.4</div>
<div class="t ax" style="top:255.00px;height:14px;line-height:14px;font-size:10px;letter-spacing:-0.501px;left:1267.45px;width:600px;text-align:center;">4.6</div>
<div class="t ax" style="top:255.00px;height:14px;line-height:14px;font-size:10px;letter-spacing:-0.501px;left:1308.65px;width:600px;text-align:center;">4.8</div>
<div class="t ax" style="top:255.00px;height:14px;line-height:14px;font-size:10px;letter-spacing:-0.501px;left:1349.85px;width:600px;text-align:center;">5.0</div>
<div class="t ax" style="top:255.00px;height:14px;line-height:14px;font-size:10px;letter-spacing:-0.501px;left:1391.05px;width:600px;text-align:center;">5.2</div>
<div class="t ax" style="top:255.00px;height:14px;line-height:14px;font-size:10px;letter-spacing:-0.501px;left:1432.25px;width:600px;text-align:center;">5.4</div>
<div class="t ax" style="top:255.00px;height:14px;line-height:14px;font-size:10px;letter-spacing:-0.501px;left:1473.35px;width:600px;text-align:center;">5.6</div>
<div class="t ax" style="top:255.00px;height:14px;line-height:14px;font-size:10px;letter-spacing:-0.501px;left:1514.55px;width:600px;text-align:center;">5.8</div>
<div style="left:613px;top:250px;width:11px;height:12px;background:#cfe4fa;border:1px solid #5a7a9a;"></div>
<svg style="left:615px;top:252px" width="7" height="8" viewBox="0 0 7 8"><path d="M1 0.5L6 4L1 7.5Z" fill="none" stroke="#333" stroke-width="1"/></svg>
<div style="left:342px;top:267px;width:1500px;height:6px;background:#dadada;"></div>
<div style="left:342px;top:273px;width:1500px;height:538.4px;background:#fff;"></div>
<div style="left:342px;top:293.3px;width:541px;height:518.0999999999999px;background:#f0f0f0;"></div>
<div style="left:1693px;top:293.3px;width:149px;height:518.0999999999999px;background:#f0f0f0;"></div>
<div style="left:342px;top:273px;width:1500px;height:19.8px;background:linear-gradient(#fff 0%,#fff 40%,#f1f1f1 100%);border-bottom:1px solid #d5d5d5;"></div>
<div class="t th" style="top:275.00px;height:16px;line-height:16px;font-size:12px;letter-spacing:-0.166px;left:345px;">Line #</div>
<div class="t th" style="top:275.00px;height:16px;line-height:16px;font-size:12px;letter-spacing:-0.062px;left:390px;">Adapter</div>
<div class="t th" style="top:275.00px;height:16px;line-height:16px;font-size:12px;letter-spacing:-0.478px;left:590px;">Process</div>
<div class="t th" style="top:275.00px;height:16px;line-height:16px;font-size:12px;letter-spacing:-0.207px;left:786px;">Segment Id</div>
<div class="t th" style="top:275.00px;height:16px;line-height:16px;font-size:12px;letter-spacing:-0.172px;left:891px;">Start Time (s)</div>
<div class="t th" style="top:275.00px;height:16px;line-height:16px;font-size:12px;letter-spacing:-0.21px;left:991px;">End Time (s)</div>
<div class="t th" style="top:275.00px;height:16px;line-height:16px;font-size:12px;letter-spacing:-0.469px;left:1091px;">Flags</div>
<div class="t th" style="top:275.00px;height:16px;line-height:16px;font-size:12px;letter-spacing:-0.051px;left:1191px;">Format</div>
<div class="t th" style="top:275.00px;height:16px;line-height:16px;font-size:12px;letter-spacing:0.145px;left:1291px;">Width</div>
<div class="t th" style="top:275.00px;height:16px;line-height:16px;font-size:12px;letter-spacing:0.219px;left:1391px;">Height</div>
<div class="t th" style="top:275.00px;height:16px;line-height:16px;font-size:12px;letter-spacing:-0.533px;left:1491px;">Usage Flags</div>
<div class="t th" style="top:275.00px;height:16px;line-height:16px;font-size:12px;letter-spacing:-0.043px;left:1591px;">VidMm Global...</div>
<div class="t th" style="top:275.00px;height:16px;line-height:16px;font-size:12px;letter-spacing:-0.836px;left:1695px;">Size</div>
<div class="t th" style="top:275.00px;height:16px;line-height:16px;font-size:12px;letter-spacing:-0.274px;left:1795px;">Legend</div>
<div class="t" style="top:281.50px;height:12px;line-height:12px;font-size:8px;letter-spacing:-0.317px;right:100.02px;text-align:right;">Sum</div>
<div style="left:342px;top:542.8px;width:1500px;height:19.200000000000045px;background:#3399ff;"></div>
<svg shape-rendering="crispEdges" style="left:0;top:0" width="1889" height="830"><line x1="342" y1="312.0" x2="1842" y2="312.0" stroke="#dadada"/><line x1="342" y1="331.2" x2="1842" y2="331.2" stroke="#dadada"/><line x1="342" y1="350.4" x2="1842" y2="350.4" stroke="#dadada"/><line x1="342" y1="369.6" x2="1842" y2="369.6" stroke="#dadada"/><line x1="342" y1="388.7" x2="1842" y2="388.7" stroke="#dadada"/><line x1="342" y1="407.9" x2="1842" y2="407.9" stroke="#dadada"/><line x1="342" y1="427.1" x2="1842" y2="427.1" stroke="#dadada"/><line x1="342" y1="446.3" x2="1842" y2="446.3" stroke="#dadada"/><line x1="342" y1="465.5" x2="1842" y2="465.5" stroke="#dadada"/><line x1="342" y1="484.7" x2="1842" y2="484.7" stroke="#dadada"/><line x1="342" y1="503.9" x2="1842" y2="503.9" stroke="#dadada"/><line x1="342" y1="523.1" x2="1842" y2="523.1" stroke="#dadada"/><line x1="342" y1="580.7" x2="1842" y2="580.7" stroke="#dadada"/><line x1="342" y1="599.8" x2="1842" y2="599.8" stroke="#dadada"/><line x1="342" y1="619.0" x2="1842" y2="619.0" stroke="#dadada"/><line x1="342" y1="638.2" x2="1842" y2="638.2" stroke="#dadada"/><line x1="342" y1="657.4" x2="1842" y2="657.4" stroke="#dadada"/><line x1="342" y1="676.6" x2="1842" y2="676.6" stroke="#dadada"/><line x1="342" y1="695.8" x2="1842" y2="695.8" stroke="#dadada"/><line x1="342" y1="715.0" x2="1842" y2="715.0" stroke="#dadada"/><line x1="342" y1="734.2" x2="1842" y2="734.2" stroke="#dadada"/><line x1="342" y1="753.4" x2="1842" y2="753.4" stroke="#dadada"/><line x1="342" y1="772.6" x2="1842" y2="772.6" stroke="#dadada"/><line x1="342" y1="791.7" x2="1842" y2="791.7" stroke="#dadada"/><line x1="342" y1="810.9" x2="1842" y2="810.9" stroke="#dadada"/><line x1="387.5" y1="273" x2="387.5" y2="811.4" stroke="#dadada"/><line x1="587" y1="273" x2="587" y2="811.4" stroke="#dadada"/><line x1="783.3" y1="273" x2="783.3" y2="811.4" stroke="#dadada"/><line x1="988.3" y1="273" x2="988.3" y2="811.4" stroke="#dadada"/><line x1="1088.4" y1="273" x2="1088.4" y2="811.4" stroke="#dadada"/><line x1="1188.3" y1="273" x2="1188.3" y2="811.4" stroke="#dadada"/><line x1="1288.2" y1="273" x2="1288.2" y2="811.4" stroke="#dadada"/><line x1="1388.2" y1="273" x2="1388.2" y2="811.4" stroke="#dadada"/><line x1="1488.2" y1="273" x2="1488.2" y2="811.4" stroke="#dadada"/><line x1="1588.2" y1="273" x2="1588.2" y2="811.4" stroke="#dadada"/><line x1="1792.5" y1="273" x2="1792.5" y2="811.4" stroke="#dadada"/></svg>
<div style="left:883px;top:273px;width:5px;height:538.4px;background:#fdd600;"></div>
<div style="left:1687.5px;top:273px;width:5px;height:538.4px;background:#a6d4e6;"></div>
<div style="left:342px;top:542.3px;width:1500px;height:1px;border-top:1px dashed #000;"></div>
<div style="left:342px;top:561.5px;width:1500px;height:1px;border-top:1px dashed #000;"></div>
<div class="t td" style="top:295.10px;height:16px;line-height:16px;font-size:12px;letter-spacing:-0.674px;right:1504.67px;text-align:right;">1</div>
<svg style="left:394px;top:298.59999999999997px" width="6" height="9" viewBox="0 0 6 9"><path d="M0.5 0.8L5 4.5L0.5 8.2Z" fill="none" stroke="#333" stroke-width="1"/></svg>
<div class="t td" style="top:295.10px;height:16px;line-height:16px;font-size:12px;letter-spacing:-0.152px;left:405px;">(1) Microsoft Basic Display Driver</div>
<div class="t td" style="top:295.10px;height:16px;line-height:16px;font-size:12px;color:#f00808;letter-spacing:-0.625px;right:99.62px;text-align:right;">946,176</div>
<div style="left:1794px;top:297.9px;width:24px;height:11px;border:1px solid #1a94a0;background:#1a94a0;"></div>
<div class="t td" style="top:314.30px;height:16px;line-height:16px;font-size:12px;letter-spacing:-0.674px;right:1504.67px;text-align:right;">2</div>
<svg style="left:392px;top:319.8px" width="9" height="5" viewBox="0 0 9 5"><path d="M0 0H9L4.5 5Z" fill="#484848"/></svg>
<div class="t td" style="top:314.30px;height:16px;line-height:16px;font-size:12px;letter-spacing:-0.323px;left:405px;">(2) AMD Radeon (TM) RX 480</div>
<div class="t td" style="top:314.30px;height:16px;line-height:16px;font-size:12px;color:#f00808;letter-spacing:-0.596px;right:99.6px;text-align:right;">5,914,812,416</div>
<div style="left:1794px;top:317.1px;width:24px;height:11px;border:1px solid #b4660f;background:#b4660f;"></div>
<div class="t td" style="top:333.50px;height:16px;line-height:16px;font-size:12px;letter-spacing:-0.674px;right:1504.67px;text-align:right;">3</div>
<svg style="left:594px;top:336.99999999999994px" width="6" height="9" viewBox="0 0 6 9"><path d="M0.5 0.8L5 4.5L0.5 8.2Z" fill="none" stroke="#333" stroke-width="1"/></svg>
<div class="t td" style="top:333.50px;height:16px;line-height:16px;font-size:12px;letter-spacing:-0.256px;left:605px;">Idle (0)</div>
<div class="t td" style="top:333.50px;height:16px;line-height:16px;font-size:12px;color:#f00808;letter-spacing:-0.625px;right:99.62px;text-align:right;">610,304</div>
<div style="left:1794px;top:336.29999999999995px;width:24px;height:11px;border:1px solid #dcc020;"></div>
<div class="t td" style="top:352.70px;height:16px;line-height:16px;font-size:12px;letter-spacing:-0.674px;right:1504.67px;text-align:right;">4</div>
<svg style="left:594px;top:356.2px" width="6" height="9" viewBox="0 0 6 9"><path d="M0.5 0.8L5 4.5L0.5 8.2Z" fill="none" stroke="#333" stroke-width="1"/></svg>
<div class="t td" style="top:352.70px;height:16px;line-height:16px;font-size:12px;letter-spacing:-0.594px;left:605px;">csrss.exe (6408)</div>
<div class="t td" style="top:352.70px;height:16px;line-height:16px;font-size:12px;color:#f00808;letter-spacing:-0.612px;right:99.61px;text-align:right;">153,673,728</div>
<div style="left:1794px;top:355.5px;width:24px;height:11px;border:1px solid #28c028;"></div>
<div class="t td" style="top:371.85px;height:16px;line-height:16px;font-size:12px;letter-spacing:-0.674px;right:1504.67px;text-align:right;">5</div>
<svg style="left:594px;top:375.34999999999997px" width="6" height="9" viewBox="0 0 6 9"><path d="M0.5 0.8L5 4.5L0.5 8.2Z" fill="none" stroke="#333" stroke-width="1"/></svg>
<div class="t td" style="top:371.85px;height:16px;line-height:16px;font-size:12px;letter-spacing:-0.36px;left:605px;">dwm.exe (1784)</div>
<div class="t td" style="top:371.85px;height:16px;line-height:16px;font-size:12px;color:#f00808;letter-spacing:-0.612px;right:99.61px;text-align:right;">280,408,064</div>
<div style="left:1794px;top:374.65px;width:24px;height:11px;border:1px solid #c82828;"></div>
<div class="t td" style="top:391.00px;height:16px;line-height:16px;font-size:12px;letter-spacing:-0.674px;right:1504.67px;text-align:right;">6</div>
<svg style="left:594px;top:394.49999999999994px" width="6" height="9" viewBox="0 0 6 9"><path d="M0.5 0.8L5 4.5L0.5 8.2Z" fill="none" stroke="#333" stroke-width="1"/></svg>
<div class="t td" style="top:391.00px;height:16px;line-height:16px;font-size:12px;letter-spacing:-0.368px;left:605px;">explorer.exe (7768)</div>
<div class="t td" style="top:391.00px;height:16px;line-height:16px;font-size:12px;color:#f00808;letter-spacing:-0.598px;right:99.6px;text-align:right;">1,306,624</div>
<div style="left:1794px;top:393.79999999999995px;width:24px;height:11px;border:1px solid #7a28d8;"></div>
<div class="t td" style="top:410.20px;height:16px;line-height:16px;font-size:12px;letter-spacing:-0.674px;right:1504.67px;text-align:right;">7</div>
<div class="t td" style="top:410.20px;height:16px;line-height:16px;font-size:12px;letter-spacing:-0.39px;left:605px;">ShellExperienceHost.exe (2004)</div>
<svg style="left:790px;top:412.7px" width="6" height="9" viewBox="0 0 6 9"><path d="M0.5 0.8L5 4.5L0.5 8.2Z" fill="none" stroke="#333" stroke-width="1"/></svg>
<div class="t td" style="top:410.20px;height:16px;line-height:16px;font-size:12px;letter-spacing:-0.835px;right:1008.84px;text-align:right;">-1</div>
<div class="t td" style="top:410.20px;height:16px;line-height:16px;font-size:12px;color:#f00808;letter-spacing:-0.517px;right:99.52px;text-align:right;">11,988,992</div>
<div style="left:1794px;top:413.0px;width:24px;height:11px;border:1px solid #e8389c;"></div>
<div class="t td" style="top:429.40px;height:16px;line-height:16px;font-size:12px;letter-spacing:-0.674px;right:1504.67px;text-align:right;">8</div>
<div class="t td" style="top:429.40px;height:16px;line-height:16px;font-size:12px;letter-spacing:-0.538px;left:605px;">SearchUI.exe (4668)</div>
<svg style="left:790px;top:431.90000000000003px" width="6" height="9" viewBox="0 0 6 9"><path d="M0.5 0.8L5 4.5L0.5 8.2Z" fill="none" stroke="#333" stroke-width="1"/></svg>
<div class="t td" style="top:429.40px;height:16px;line-height:16px;font-size:12px;letter-spacing:-0.835px;right:1008.84px;text-align:right;">-1</div>
<div class="t td" style="top:429.40px;height:16px;line-height:16px;font-size:12px;color:#f00808;letter-spacing:-0.598px;right:99.6px;text-align:right;">8,716,288</div>
<div style="left:1794px;top:432.20000000000005px;width:24px;height:11px;border:1px solid #5a1a98;"></div>
<div class="t td" style="top:448.60px;height:16px;line-height:16px;font-size:12px;letter-spacing:-0.674px;right:1504.67px;text-align:right;">9</div>
<svg style="left:594px;top:452.09999999999997px" width="6" height="9" viewBox="0 0 6 9"><path d="M0.5 0.8L5 4.5L0.5 8.2Z" fill="none" stroke="#333" stroke-width="1"/></svg>
<div class="t td" style="top:448.60px;height:16px;line-height:16px;font-size:12px;letter-spacing:-0.4px;left:605px;">RadeonSettings.exe (7036)</div>
<div class="t td" style="top:448.60px;height:16px;line-height:16px;font-size:12px;color:#f00808;letter-spacing:-0.606px;right:99.61px;text-align:right;">31,612,928</div>
<div style="left:1794px;top:451.4px;width:24px;height:11px;border:1px solid #4a1ab0;"></div>
<div class="t td" style="top:467.80px;height:16px;line-height:16px;font-size:12px;letter-spacing:-0.674px;right:1504.67px;text-align:right;">10</div>
<div class="t td" style="top:467.80px;height:16px;line-height:16px;font-size:12px;letter-spacing:-0.265px;left:605px;">Calculator.exe (2580)</div>
<svg style="left:790px;top:470.3px" width="6" height="9" viewBox="0 0 6 9"><path d="M0.5 0.8L5 4.5L0.5 8.2Z" fill="none" stroke="#333" stroke-width="1"/></svg>
<div class="t td" style="top:467.80px;height:16px;line-height:16px;font-size:12px;letter-spacing:-0.835px;right:1008.84px;text-align:right;">-1</div>
<div class="t td" style="top:467.80px;height:16px;line-height:16px;font-size:12px;color:#f00808;letter-spacing:-0.598px;right:99.6px;text-align:right;">4,485,120</div>
<div style="left:1794px;top:470.6px;width:24px;height:11px;border:1px solid #6a2ad8;"></div>
<div class="t td" style="top:487.00px;height:16px;line-height:16px;font-size:12px;letter-spacing:-0.229px;right:1504.23px;text-align:right;">11</div>
<svg style="left:594px;top:490.49999999999994px" width="6" height="9" viewBox="0 0 6 9"><path d="M0.5 0.8L5 4.5L0.5 8.2Z" fill="none" stroke="#333" stroke-width="1"/></svg>
<div class="t td" style="top:487.00px;height:16px;line-height:16px;font-size:12px;letter-spacing:-0.444px;left:605px;">wpa.exe (5468)</div>
<div class="t td" style="top:487.00px;height:16px;line-height:16px;font-size:12px;color:#f00808;letter-spacing:-0.612px;right:99.61px;text-align:right;">142,966,784</div>
<div style="left:1794px;top:489.79999999999995px;width:24px;height:11px;border:1px solid #2a48d8;"></div>
<div class="t td" style="top:506.20px;height:16px;line-height:16px;font-size:12px;letter-spacing:-0.674px;right:1504.67px;text-align:right;">12</div>
<svg style="left:592px;top:511.70000000000005px" width="9" height="5" viewBox="0 0 9 5"><path d="M0 0H9L4.5 5Z" fill="#484848"/></svg>
<div class="t td" style="top:506.20px;height:16px;line-height:16px;font-size:12px;letter-spacing:-0.628px;left:605px;">Civ6_Win64_DX12_Release.exe (...</div>
<div class="t td" style="top:506.20px;height:16px;line-height:16px;font-size:12px;color:#f00808;letter-spacing:-0.596px;right:99.6px;text-align:right;">5,196,595,200</div>
<div style="left:1794px;top:509.00000000000006px;width:24px;height:11px;border:1px solid #a04a18;"></div>
<div class="t td" style="top:525.40px;height:16px;line-height:16px;font-size:12px;letter-spacing:-0.674px;right:1504.67px;text-align:right;">13</div>
<svg style="left:788px;top:530.9000000000001px" width="9" height="5" viewBox="0 0 9 5"><path d="M0 0H9L4.5 5Z" fill="#484848"/></svg>
<div class="t td" style="top:525.40px;height:16px;line-height:16px;font-size:12px;letter-spacing:-0.835px;right:1008.84px;text-align:right;">-1</div>
<div class="t td" style="top:525.40px;height:16px;line-height:16px;font-size:12px;color:#f00808;letter-spacing:-0.606px;right:99.61px;text-align:right;">44,093,440</div>
<div style="left:1794px;top:528.2px;width:24px;height:11px;border:1px solid #e020a8;"></div>
<div class="t td" style="top:544.60px;height:16px;line-height:16px;font-size:12px;color:#fff;letter-spacing:-0.674px;right:1504.67px;text-align:right;">14</div>
<div class="t td" style="top:544.60px;height:16px;line-height:16px;font-size:12px;color:#fff;letter-spacing:-0.643px;right:903.64px;text-align:right;">3.352333000</div>
<div class="t td" style="top:544.60px;height:16px;line-height:16px;font-size:12px;color:#fff;letter-spacing:-0.643px;right:803.64px;text-align:right;">4.076967300</div>
<div class="t td" style="top:544.60px;height:16px;line-height:16px;font-size:12px;color:#fff;letter-spacing:-0.326px;left:1090px;">CpuVisible (0x00...</div>
<div class="t td" style="top:544.60px;height:16px;line-height:16px;font-size:12px;color:#fff;letter-spacing:-0.518px;left:1190px;">NONE</div>
<div class="t td" style="top:544.60px;height:16px;line-height:16px;font-size:12px;color:#fff;letter-spacing:-0.674px;right:503.67px;text-align:right;">0</div>
<div class="t td" style="top:544.60px;height:16px;line-height:16px;font-size:12px;color:#fff;letter-spacing:-0.674px;right:403.67px;text-align:right;">0</div>
<div class="t td" style="top:544.60px;height:16px;line-height:16px;font-size:12px;color:#fff;letter-spacing:-0.788px;right:203.79px;text-align:right;">0xFFFF88051556...</div>
<div class="t td" style="top:544.60px;height:16px;line-height:16px;font-size:12px;color:#fff;letter-spacing:-0.598px;right:99.6px;text-align:right;">4,239,360</div>
<div class="t td" style="top:563.80px;height:16px;line-height:16px;font-size:12px;letter-spacing:-0.674px;right:1504.67px;text-align:right;">15</div>
<div class="t td" style="top:563.80px;height:16px;line-height:16px;font-size:12px;letter-spacing:-0.643px;right:903.64px;text-align:right;">3.477154000</div>
<div class="t td" style="top:563.80px;height:16px;line-height:16px;font-size:12px;letter-spacing:-0.643px;right:803.64px;text-align:right;">3.753860000</div>
<div class="t td" style="top:563.80px;height:16px;line-height:16px;font-size:12px;letter-spacing:-0.326px;left:1090px;">CpuVisible (0x00...</div>
<div class="t td" style="top:563.80px;height:16px;line-height:16px;font-size:12px;letter-spacing:-0.518px;left:1190px;">NONE</div>
<div class="t td" style="top:563.80px;height:16px;line-height:16px;font-size:12px;letter-spacing:-0.674px;right:503.67px;text-align:right;">0</div>
<div class="t td" style="top:563.80px;height:16px;line-height:16px;font-size:12px;letter-spacing:-0.674px;right:403.67px;text-align:right;">0</div>
<div class="t td" style="top:563.80px;height:16px;line-height:16px;font-size:12px;letter-spacing:-0.826px;right:203.83px;text-align:right;">0xFFFF8804F653...</div>
<div class="t td" style="top:563.80px;height:16px;line-height:16px;font-size:12px;letter-spacing:-0.598px;right:99.6px;text-align:right;">4,259,840</div>
<div class="t td" style="top:582.95px;height:16px;line-height:16px;font-size:12px;letter-spacing:-0.674px;right:1504.67px;text-align:right;">16</div>
<div class="t td" style="top:582.95px;height:16px;line-height:16px;font-size:12px;letter-spacing:-0.643px;right:903.64px;text-align:right;">3.827970100</div>
<div class="t td" style="top:582.95px;height:16px;line-height:16px;font-size:12px;letter-spacing:-0.643px;right:803.64px;text-align:right;">4.105901800</div>
<div class="t td" style="top:582.95px;height:16px;line-height:16px;font-size:12px;letter-spacing:-0.326px;left:1090px;">CpuVisible (0x00...</div>
<div class="t td" style="top:582.95px;height:16px;line-height:16px;font-size:12px;letter-spacing:-0.518px;left:1190px;">NONE</div>
<div class="t td" style="top:582.95px;height:16px;line-height:16px;font-size:12px;letter-spacing:-0.674px;right:503.67px;text-align:right;">0</div>
<div class="t td" style="top:582.95px;height:16px;line-height:16px;font-size:12px;letter-spacing:-0.674px;right:403.67px;text-align:right;">0</div>
<div class="t td" style="top:582.95px;height:16px;line-height:16px;font-size:12px;letter-spacing:-0.825px;right:203.82px;text-align:right;">0xFFFF88051B79...</div>
<div class="t td" style="top:582.95px;height:16px;line-height:16px;font-size:12px;letter-spacing:-0.598px;right:99.6px;text-align:right;">4,259,840</div>
<div class="t td" style="top:602.10px;height:16px;line-height:16px;font-size:12px;letter-spacing:-0.674px;right:1504.67px;text-align:right;">17</div>
<div class="t td" style="top:602.10px;height:16px;line-height:16px;font-size:12px;letter-spacing:-0.643px;right:903.64px;text-align:right;">3.857101600</div>
<div class="t td" style="top:602.10px;height:16px;line-height:16px;font-size:12px;letter-spacing:-0.643px;right:803.64px;text-align:right;">4.194048800</div>
<div class="t td" style="top:602.10px;height:16px;line-height:16px;font-size:12px;letter-spacing:-0.326px;left:1090px;">CpuVisible (0x00...</div>
<div class="t td" style="top:602.10px;height:16px;line-height:16px;font-size:12px;letter-spacing:-0.518px;left:1190px;">NONE</div>
<div class="t td" style="top:602.10px;height:16px;line-height:16px;font-size:12px;letter-spacing:-0.674px;right:503.67px;text-align:right;">0</div>
<div class="t td" style="top:602.10px;height:16px;line-height:16px;font-size:12px;letter-spacing:-0.674px;right:403.67px;text-align:right;">0</div>
<div class="t td" style="top:602.10px;height:16px;line-height:16px;font-size:12px;letter-spacing:-0.752px;right:203.75px;text-align:right;">0xFFFF88050AC...</div>
<div class="t td" style="top:602.10px;height:16px;line-height:16px;font-size:12px;letter-spacing:-0.598px;right:99.6px;text-align:right;">4,296,704</div>
<div class="t td" style="top:621.30px;height:16px;line-height:16px;font-size:12px;letter-spacing:-0.674px;right:1504.67px;text-align:right;">18</div>
<div class="t td" style="top:621.30px;height:16px;line-height:16px;font-size:12px;letter-spacing:-0.643px;right:903.64px;text-align:right;">3.886722500</div>
<div class="t td" style="top:621.30px;height:16px;line-height:16px;font-size:12px;letter-spacing:-0.643px;right:803.64px;text-align:right;">4.673828100</div>
<div class="t td" style="top:621.30px;height:16px;line-height:16px;font-size:12px;letter-spacing:-0.326px;left:1090px;">CpuVisible (0x00...</div>
<div class="t td" style="top:621.30px;height:16px;line-height:16px;font-size:12px;letter-spacing:-0.518px;left:1190px;">NONE</div>
<div class="t td" style="top:621.30px;height:16px;line-height:16px;font-size:12px;letter-spacing:-0.674px;right:503.67px;text-align:right;">0</div>
<div class="t td" style="top:621.30px;height:16px;line-height:16px;font-size:12px;letter-spacing:-0.674px;right:403.67px;text-align:right;">0</div>
<div class="t td" style="top:621.30px;height:16px;line-height:16px;font-size:12px;letter-spacing:-0.788px;right:203.79px;text-align:right;">0xFFFF88051738...</div>
<div class="t td" style="top:621.30px;height:16px;line-height:16px;font-size:12px;letter-spacing:-0.598px;right:99.6px;text-align:right;">4,337,664</div>
<div class="t td" style="top:640.50px;height:16px;line-height:16px;font-size:12px;letter-spacing:-0.674px;right:1504.67px;text-align:right;">19</div>
<div class="t td" style="top:640.50px;height:16px;line-height:16px;font-size:12px;letter-spacing:-0.643px;right:903.64px;text-align:right;">3.945366400</div>
<div class="t td" style="top:640.50px;height:16px;line-height:16px;font-size:12px;letter-spacing:-0.643px;right:803.64px;text-align:right;">4.461670600</div>
<div class="t td" style="top:640.50px;height:16px;line-height:16px;font-size:12px;letter-spacing:-0.326px;left:1090px;">CpuVisible (0x00...</div>
<div class="t td" style="top:640.50px;height:16px;line-height:16px;font-size:12px;letter-spacing:-0.518px;left:1190px;">NONE</div>
<div class="t td" style="top:640.50px;height:16px;line-height:16px;font-size:12px;letter-spacing:-0.674px;right:503.67px;text-align:right;">0</div>
<div class="t td" style="top:640.50px;height:16px;line-height:16px;font-size:12px;letter-spacing:-0.674px;right:403.67px;text-align:right;">0</div>
<div class="t td" style="top:640.50px;height:16px;line-height:16px;font-size:12px;letter-spacing:-0.779px;right:203.78px;text-align:right;">0xFFFF88051B4A...</div>
<div class="t td" style="top:640.50px;height:16px;line-height:16px;font-size:12px;letter-spacing:-0.598px;right:99.6px;text-align:right;">4,468,736</div>
<div class="t td" style="top:659.70px;height:16px;line-height:16px;font-size:12px;letter-spacing:-0.674px;right:1504.67px;text-align:right;">20</div>
<div class="t td" style="top:659.70px;height:16px;line-height:16px;font-size:12px;letter-spacing:-0.643px;right:903.64px;text-align:right;">4.299126700</div>
<div class="t td" style="top:659.70px;height:16px;line-height:16px;font-size:12px;letter-spacing:-0.549px;right:803.55px;text-align:right;">9,223,372,036.85...</div>
<div class="t td" style="top:659.70px;height:16px;line-height:16px;font-size:12px;letter-spacing:-0.326px;left:1090px;">CpuVisible (0x00...</div>
<div class="t td" style="top:659.70px;height:16px;line-height:16px;font-size:12px;letter-spacing:-0.518px;left:1190px;">NONE</div>
<div class="t td" style="top:659.70px;height:16px;line-height:16px;font-size:12px;letter-spacing:-0.674px;right:503.67px;text-align:right;">0</div>
<div class="t td" style="top:659.70px;height:16px;line-height:16px;font-size:12px;letter-spacing:-0.674px;right:403.67px;text-align:right;">0</div>
<div class="t td" style="top:659.70px;height:16px;line-height:16px;font-size:12px;letter-spacing:-0.805px;right:203.81px;text-align:right;">0xFFFF8805083C...</div>
<div class="t td" style="top:659.70px;height:16px;line-height:16px;font-size:12px;letter-spacing:-0.598px;right:99.6px;text-align:right;">4,530,176</div>
<div class="t td" style="top:678.90px;height:16px;line-height:16px;font-size:12px;letter-spacing:-0.674px;right:1504.67px;text-align:right;">21</div>
<div class="t td" style="top:678.90px;height:16px;line-height:16px;font-size:12px;letter-spacing:-0.643px;right:903.64px;text-align:right;">4.540814200</div>
<div class="t td" style="top:678.90px;height:16px;line-height:16px;font-size:12px;letter-spacing:-0.643px;right:803.64px;text-align:right;">4.823873300</div>
<div class="t td" style="top:678.90px;height:16px;line-height:16px;font-size:12px;letter-spacing:-0.326px;left:1090px;">CpuVisible (0x00...</div>
<div class="t td" style="top:678.90px;height:16px;line-height:16px;font-size:12px;letter-spacing:-0.518px;left:1190px;">NONE</div>
<div class="t td" style="top:678.90px;height:16px;line-height:16px;font-size:12px;letter-spacing:-0.674px;right:503.67px;text-align:right;">0</div>
<div class="t td" style="top:678.90px;height:16px;line-height:16px;font-size:12px;letter-spacing:-0.674px;right:403.67px;text-align:right;">0</div>
<div class="t td" style="top:678.90px;height:16px;line-height:16px;font-size:12px;letter-spacing:-0.788px;right:203.79px;text-align:right;">0xFFFF88051556...</div>
<div class="t td" style="top:678.90px;height:16px;line-height:16px;font-size:12px;letter-spacing:-0.598px;right:99.6px;text-align:right;">4,579,328</div>
<div class="t td" style="top:698.10px;height:16px;line-height:16px;font-size:12px;letter-spacing:-0.674px;right:1504.67px;text-align:right;">22</div>
<div class="t td" style="top:698.10px;height:16px;line-height:16px;font-size:12px;letter-spacing:-0.643px;right:903.64px;text-align:right;">5.027540200</div>
<div class="t td" style="top:698.10px;height:16px;line-height:16px;font-size:12px;letter-spacing:-0.549px;right:803.55px;text-align:right;">9,223,372,036.85...</div>
<div class="t td" style="top:698.10px;height:16px;line-height:16px;font-size:12px;letter-spacing:-0.326px;left:1090px;">CpuVisible (0x00...</div>
<div class="t td" style="top:698.10px;height:16px;line-height:16px;font-size:12px;letter-spacing:-0.518px;left:1190px;">NONE</div>
<div class="t td" style="top:698.10px;height:16px;line-height:16px;font-size:12px;letter-spacing:-0.674px;right:503.67px;text-align:right;">0</div>
<div class="t td" style="top:698.10px;height:16px;line-height:16px;font-size:12px;letter-spacing:-0.674px;right:403.67px;text-align:right;">0</div>
<div class="t td" style="top:698.10px;height:16px;line-height:16px;font-size:12px;letter-spacing:-0.788px;right:203.79px;text-align:right;">0xFFFF88051588...</div>
<div class="t td" style="top:698.10px;height:16px;line-height:16px;font-size:12px;letter-spacing:-0.598px;right:99.6px;text-align:right;">4,554,752</div>
<div class="t td" style="top:717.30px;height:16px;line-height:16px;font-size:12px;letter-spacing:-0.674px;right:1504.67px;text-align:right;">23</div>
<div class="t td" style="top:717.30px;height:16px;line-height:16px;font-size:12px;letter-spacing:-0.643px;right:903.64px;text-align:right;">5.148931900</div>
<div class="t td" style="top:717.30px;height:16px;line-height:16px;font-size:12px;letter-spacing:-0.549px;right:803.55px;text-align:right;">9,223,372,036.85...</div>
<div class="t td" style="top:717.30px;height:16px;line-height:16px;font-size:12px;letter-spacing:-0.326px;left:1090px;">CpuVisible (0x00...</div>
<div class="t td" style="top:717.30px;height:16px;line-height:16px;font-size:12px;letter-spacing:-0.518px;left:1190px;">NONE</div>
<div class="t td" style="top:717.30px;height:16px;line-height:16px;font-size:12px;letter-spacing:-0.674px;right:503.67px;text-align:right;">0</div>
<div class="t td" style="top:717.30px;height:16px;line-height:16px;font-size:12px;letter-spacing:-0.674px;right:403.67px;text-align:right;">0</div>
<div class="t td" style="top:717.30px;height:16px;line-height:16px;font-size:12px;letter-spacing:-0.824px;right:203.82px;text-align:right;">0xFFFF880502FA...</div>
<div class="t td" style="top:717.30px;height:16px;line-height:16px;font-size:12px;letter-spacing:-0.598px;right:99.6px;text-align:right;">4,567,040</div>
<div class="t td" style="top:736.50px;height:16px;line-height:16px;font-size:12px;letter-spacing:-0.674px;right:1504.67px;text-align:right;">24</div>
<svg style="left:790px;top:739.0px" width="6" height="9" viewBox="0 0 6 9"><path d="M0.5 0.8L5 4.5L0.5 8.2Z" fill="none" stroke="#333" stroke-width="1"/></svg>
<div class="t td" style="top:736.50px;height:16px;line-height:16px;font-size:12px;letter-spacing:-0.674px;right:1008.67px;text-align:right;">5</div>
<div class="t td" style="top:736.50px;height:16px;line-height:16px;font-size:12px;color:#f00808;letter-spacing:-0.596px;right:99.6px;text-align:right;">1,191,796,736</div>
<div style="left:1794px;top:739.3px;width:24px;height:11px;border:1px solid #28a8d8;"></div>
<div class="t td" style="top:755.70px;height:16px;line-height:16px;font-size:12px;letter-spacing:-0.674px;right:1504.67px;text-align:right;">25</div>
<svg style="left:790px;top:758.2px" width="6" height="9" viewBox="0 0 6 9"><path d="M0.5 0.8L5 4.5L0.5 8.2Z" fill="none" stroke="#333" stroke-width="1"/></svg>
<div class="t td" style="top:755.70px;height:16px;line-height:16px;font-size:12px;letter-spacing:-0.674px;right:1008.67px;text-align:right;">3</div>
<div class="t td" style="top:755.70px;height:16px;line-height:16px;font-size:12px;color:#f00808;letter-spacing:-0.596px;right:99.6px;text-align:right;">3,862,257,664</div>
<div style="left:1794px;top:758.5px;width:24px;height:11px;border:1px solid #e020a8;"></div>
<div class="t td" style="top:774.85px;height:16px;line-height:16px;font-size:12px;letter-spacing:-0.674px;right:1504.67px;text-align:right;">26</div>
<svg style="left:790px;top:777.3500000000001px" width="6" height="9" viewBox="0 0 6 9"><path d="M0.5 0.8L5 4.5L0.5 8.2Z" fill="none" stroke="#333" stroke-width="1"/></svg>
<div class="t td" style="top:774.85px;height:16px;line-height:16px;font-size:12px;letter-spacing:-0.674px;right:1008.67px;text-align:right;">2</div>
<div class="t td" style="top:774.85px;height:16px;line-height:16px;font-size:12px;color:#f00808;letter-spacing:-0.606px;right:99.61px;text-align:right;">98,447,360</div>
<div style="left:1794px;top:777.6500000000001px;width:24px;height:11px;border:1px solid #5a38d8;"></div>
<div class="t td" style="top:794.00px;height:16px;line-height:16px;font-size:12px;letter-spacing:-0.674px;right:1504.67px;text-align:right;">27</div>
<svg style="left:594px;top:797.5px" width="6" height="9" viewBox="0 0 6 9"><path d="M0.5 0.8L5 4.5L0.5 8.2Z" fill="none" stroke="#333" stroke-width="1"/></svg>
<div class="t td" style="top:794.00px;height:16px;line-height:16px;font-size:12px;letter-spacing:-0.52px;left:605px;">excel.exe (6624)</div>
<div class="t td" style="top:794.00px;height:16px;line-height:16px;font-size:12px;color:#f00808;letter-spacing:-0.606px;right:99.61px;text-align:right;">82,448,384</div>
<div style="left:1794px;top:796.8px;width:24px;height:11px;border:1px solid #8ab828;"></div>
<svg shape-rendering="crispEdges" style="left:0;top:0" width="1889" height="1037"><rect x="1311" y="966" width="150" height="24" fill="#3399ff"/><line x1="627" y1="965.5" x2="1311" y2="965.5" stroke="#000"/><line x1="1461" y1="965.5" x2="1824.5" y2="965.5" stroke="#000"/><line x1="1824.5" y1="966.0" x2="1824.5" y2="972.0" stroke="#c4c4c4"/><line x1="630.5" y1="966.0" x2="630.5" y2="972.0" stroke="#c4c4c4"/><line x1="641.5" y1="966.0" x2="641.5" y2="972.0" stroke="#c4c4c4"/><line x1="651.5" y1="966.0" x2="651.5" y2="972.0" stroke="#c4c4c4"/><line x1="661.5" y1="966.0" x2="661.5" y2="978.0" stroke="#000"/><line x1="672.5" y1="966.0" x2="672.5" y2="972.0" stroke="#c4c4c4"/><line x1="682.5" y1="966.0" x2="682.5" y2="972.0" stroke="#c4c4c4"/><line x1="692.5" y1="966.0" x2="692.5" y2="972.0" stroke="#c4c4c4"/><line x1="702.5" y1="966.0" x2="702.5" y2="978.0" stroke="#000"/><line x1="713.5" y1="966.0" x2="713.5" y2="972.0" stroke="#c4c4c4"/><line x1="723.5" y1="966.0" x2="723.5" y2="972.0" stroke="#c4c4c4"/><line x1="733.5" y1="966.0" x2="733.5" y2="972.0" stroke="#c4c4c4"/><line x1="744.5" y1="966.0" x2="744.5" y2="978.0" stroke="#000"/><line x1="754.5" y1="966.0" x2="754.5" y2="972.0" stroke="#c4c4c4"/><line x1="764.5" y1="966.0" x2="764.5" y2="972.0" stroke="#c4c4c4"/><line x1="775.5" y1="966.0" x2="775.5" y2="972.0" stroke="#c4c4c4"/><line x1="785.5" y1="966.0" x2="785.5" y2="978.0" stroke="#000"/><line x1="795.5" y1="966.0" x2="795.5" y2="972.0" stroke="#c4c4c4"/><line x1="805.5" y1="966.0" x2="805.5" y2="972.0" stroke="#c4c4c4"/><line x1="816.5" y1="966.0" x2="816.5" y2="972.0" stroke="#c4c4c4"/><line x1="826.5" y1="966.0" x2="826.5" y2="978.0" stroke="#000"/><line x1="836.5" y1="966.0" x2="836.5" y2="972.0" stroke="#c4c4c4"/><line x1="847.5" y1="966.0" x2="847.5" y2="972.0" stroke="#c4c4c4"/><line x1="857.5" y1="966.0" x2="857.5" y2="972.0" stroke="#c4c4c4"/><line x1="867.5" y1="966.0" x2="867.5" y2="978.0" stroke="#000"/><line x1="877.5" y1="966.0" x2="877.5" y2="972.0" stroke="#c4c4c4"/><line x1="888.5" y1="966.0" x2="888.5" y2="972.0" stroke="#c4c4c4"/><line x1="898.5" y1="966.0" x2="898.5" y2="972.0" stroke="#c4c4c4"/><line x1="908.5" y1="966.0" x2="908.5" y2="978.0" stroke="#000"/><line x1="919.5" y1="966.0" x2="919.5" y2="972.0" stroke="#c4c4c4"/><line x1="929.5" y1="966.0" x2="929.5" y2="972.0" stroke="#c4c4c4"/><line x1="939.5" y1="966.0" x2="939.5" y2="972.0" stroke="#c4c4c4"/><line x1="950.5" y1="966.0" x2="950.5" y2="978.0" stroke="#000"/><line x1="960.5" y1="966.0" x2="960.5" y2="972.0" stroke="#c4c4c4"/><line x1="970.5" y1="966.0" x2="970.5" y2="972.0" stroke="#c4c4c4"/><line x1="980.5" y1="966.0" x2="980.5" y2="972.0" stroke="#c4c4c4"/><line x1="991.5" y1="966.0" x2="991.5" y2="978.0" stroke="#000"/><line x1="1001.5" y1="966.0" x2="1001.5" y2="972.0" stroke="#c4c4c4"/><line x1="1011.5" y1="966.0" x2="1011.5" y2="972.0" stroke="#c4c4c4"/><line x1="1022.5" y1="966.0" x2="1022.5" y2="972.0" stroke="#c4c4c4"/><line x1="1032.5" y1="966.0" x2="1032.5" y2="978.0" stroke="#000"/><line x1="1042.5" y1="966.0" x2="1042.5" y2="972.0" stroke="#c4c4c4"/><line x1="1052.5" y1="966.0" x2="1052.5" y2="972.0" stroke="#c4c4c4"/><line x1="1063.5" y1="966.0" x2="1063.5" y2="972.0" stroke="#c4c4c4"/><line x1="1073.5" y1="966.0" x2="1073.5" y2="978.0" stroke="#000"/><line x1="1083.5" y1="966.0" x2="1083.5" y2="972.0" stroke="#c4c4c4"/><line x1="1094.5" y1="966.0" x2="1094.5" y2="972.0" stroke="#c4c4c4"/><line x1="1104.5" y1="966.0" x2="1104.5" y2="972.0" stroke="#c4c4c4"/><line x1="1114.5" y1="966.0" x2="1114.5" y2="978.0" stroke="#000"/><line x1="1125.5" y1="966.0" x2="1125.5" y2="972.0" stroke="#c4c4c4"/><line x1="1135.5" y1="966.0" x2="1135.5" y2="972.0" stroke="#c4c4c4"/><line x1="1145.5" y1="966.0" x2="1145.5" y2="972.0" stroke="#c4c4c4"/><line x1="1155.5" y1="966.0" x2="1155.5" y2="978.0" stroke="#000"/><line x1="1166.5" y1="966.0" x2="1166.5" y2="972.0" stroke="#c4c4c4"/><line x1="1176.5" y1="966.0" x2="1176.5" y2="972.0" stroke="#c4c4c4"/><line x1="1186.5" y1="966.0" x2="1186.5" y2="972.0" stroke="#c4c4c4"/><line x1="1197.5" y1="966.0" x2="1197.5" y2="978.0" stroke="#000"/><line x1="1207.5" y1="966.0" x2="1207.5" y2="972.0" stroke="#c4c4c4"/><line x1="1217.5" y1="966.0" x2="1217.5" y2="972.0" stroke="#c4c4c4"/><line x1="1228.5" y1="966.0" x2="1228.5" y2="972.0" stroke="#c4c4c4"/><line x1="1238.5" y1="966.0" x2="1238.5" y2="978.0" stroke="#000"/><line x1="1248.5" y1="966.0" x2="1248.5" y2="972.0" stroke="#c4c4c4"/><line x1="1258.5" y1="966.0" x2="1258.5" y2="972.0" stroke="#c4c4c4"/><line x1="1269.5" y1="966.0" x2="1269.5" y2="972.0" stroke="#c4c4c4"/><line x1="1279.5" y1="966.0" x2="1279.5" y2="978.0" stroke="#000"/><line x1="1289.5" y1="966.0" x2="1289.5" y2="972.0" stroke="#c4c4c4"/><line x1="1300.5" y1="966.0" x2="1300.5" y2="972.0" stroke="#c4c4c4"/><line x1="1310.5" y1="966.0" x2="1310.5" y2="972.0" stroke="#c4c4c4"/><line x1="1320.5" y1="966.0" x2="1320.5" y2="978.0" stroke="#fff"/><line x1="1330.5" y1="966.0" x2="1330.5" y2="972.0" stroke="#8cc4ff"/><line x1="1341.5" y1="966.0" x2="1341.5" y2="972.0" stroke="#8cc4ff"/><line x1="1351.5" y1="966.0" x2="1351.5" y2="972.0" stroke="#8cc4ff"/><line x1="1361.5" y1="966.0" x2="1361.5" y2="978.0" stroke="#fff"/><line x1="1372.5" y1="966.0" x2="1372.5" y2="972.0" stroke="#8cc4ff"/><line x1="1382.5" y1="966.0" x2="1382.5" y2="972.0" stroke="#8cc4ff"/><line x1="1392.5" y1="966.0" x2="1392.5" y2="972.0" stroke="#8cc4ff"/><line x1="1403.5" y1="966.0" x2="1403.5" y2="978.0" stroke="#fff"/><line x1="1413.5" y1="966.0" x2="1413.5" y2="972.0" stroke="#8cc4ff"/><line x1="1423.5" y1="966.0" x2="1423.5" y2="972.0" stroke="#8cc4ff"/><line x1="1433.5" y1="966.0" x2="1433.5" y2="972.0" stroke="#8cc4ff"/><line x1="1444.5" y1="966.0" x2="1444.5" y2="978.0" stroke="#fff"/><line x1="1454.5" y1="966.0" x2="1454.5" y2="972.0" stroke="#8cc4ff"/><line x1="1464.5" y1="966.0" x2="1464.5" y2="972.0" stroke="#c4c4c4"/><line x1="1475.5" y1="966.0" x2="1475.5" y2="972.0" stroke="#c4c4c4"/><line x1="1485.5" y1="966.0" x2="1485.5" y2="978.0" stroke="#000"/><line x1="1495.5" y1="966.0" x2="1495.5" y2="972.0" stroke="#c4c4c4"/><line x1="1505.5" y1="966.0" x2="1505.5" y2="972.0" stroke="#c4c4c4"/><line x1="1516.5" y1="966.0" x2="1516.5" y2="972.0" stroke="#c4c4c4"/><line x1="1526.5" y1="966.0" x2="1526.5" y2="978.0" stroke="#000"/><line x1="1536.5" y1="966.0" x2="1536.5" y2="972.0" stroke="#c4c4c4"/><line x1="1547.5" y1="966.0" x2="1547.5" y2="972.0" stroke="#c4c4c4"/><line x1="1557.5" y1="966.0" x2="1557.5" y2="972.0" stroke="#c4c4c4"/><line x1="1567.5" y1="966.0" x2="1567.5" y2="978.0" stroke="#000"/><line x1="1578.5" y1="966.0" x2="1578.5" y2="972.0" stroke="#c4c4c4"/><line x1="1588.5" y1="966.0" x2="1588.5" y2="972.0" stroke="#c4c4c4"/><line x1="1598.5" y1="966.0" x2="1598.5" y2="972.0" stroke="#c4c4c4"/><line x1="1608.5" y1="966.0" x2="1608.5" y2="978.0" stroke="#000"/><line x1="1619.5" y1="966.0" x2="1619.5" y2="972.0" stroke="#c4c4c4"/><line x1="1629.5" y1="966.0" x2="1629.5" y2="972.0" stroke="#c4c4c4"/><line x1="1639.5" y1="966.0" x2="1639.5" y2="972.0" stroke="#c4c4c4"/><line x1="1650.5" y1="966.0" x2="1650.5" y2="978.0" stroke="#000"/><line x1="1660.5" y1="966.0" x2="1660.5" y2="972.0" stroke="#c4c4c4"/><line x1="1670.5" y1="966.0" x2="1670.5" y2="972.0" stroke="#c4c4c4"/><line x1="1680.5" y1="966.0" x2="1680.5" y2="972.0" stroke="#c4c4c4"/><line x1="1691.5" y1="966.0" x2="1691.5" y2="978.0" stroke="#000"/><line x1="1701.5" y1="966.0" x2="1701.5" y2="972.0" stroke="#c4c4c4"/><line x1="1711.5" y1="966.0" x2="1711.5" y2="972.0" stroke="#c4c4c4"/><line x1="1722.5" y1="966.0" x2="1722.5" y2="972.0" stroke="#c4c4c4"/><line x1="1732.5" y1="966.0" x2="1732.5" y2="978.0" stroke="#000"/><line x1="1742.5" y1="966.0" x2="1742.5" y2="972.0" stroke="#c4c4c4"/><line x1="1753.5" y1="966.0" x2="1753.5" y2="972.0" stroke="#c4c4c4"/><line x1="1763.5" y1="966.0" x2="1763.5" y2="972.0" stroke="#c4c4c4"/><line x1="1773.5" y1="966.0" x2="1773.5" y2="978.0" stroke="#000"/><line x1="1783.5" y1="966.0" x2="1783.5" y2="972.0" stroke="#c4c4c4"/><line x1="1794.5" y1="966.0" x2="1794.5" y2="972.0" stroke="#c4c4c4"/><line x1="1804.5" y1="966.0" x2="1804.5" y2="972.0" stroke="#c4c4c4"/><line x1="1814.5" y1="966.0" x2="1814.5" y2="978.0" stroke="#000"/></svg>
<div class="t ax" style="top:978.00px;height:14px;line-height:14px;font-size:10px;letter-spacing:-0.501px;left:627.3px;">0.0</div>
<div class="t ax" style="top:978.00px;height:14px;line-height:14px;font-size:10px;letter-spacing:-0.501px;left:361.55px;width:600px;text-align:center;">0.2</div>
<div class="t ax" style="top:978.00px;height:14px;line-height:14px;font-size:10px;letter-spacing:-0.501px;left:402.75px;width:600px;text-align:center;">0.4</div>
<div class="t ax" style="top:978.00px;height:14px;line-height:14px;font-size:10px;letter-spacing:-0.501px;left:443.85px;width:600px;text-align:center;">0.6</div>
<div class="t ax" style="top:978.00px;height:14px;line-height:14px;font-size:10px;letter-spacing:-0.501px;left:485.05px;width:600px;text-align:center;">0.8</div>
<div class="t ax" style="top:978.00px;height:14px;line-height:14px;font-size:10px;letter-spacing:-0.501px;left:526.25px;width:600px;text-align:center;">1.0</div>
<div class="t ax" style="top:978.00px;height:14px;line-height:14px;font-size:10px;letter-spacing:-0.501px;left:567.45px;width:600px;text-align:center;">1.2</div>
<div class="t ax" style="top:978.00px;height:14px;line-height:14px;font-size:10px;letter-spacing:-0.501px;left:608.65px;width:600px;text-align:center;">1.4</div>
<div class="t ax" style="top:978.00px;height:14px;line-height:14px;font-size:10px;letter-spacing:-0.501px;left:649.75px;width:600px;text-align:center;">1.6</div>
<div class="t ax" style="top:978.00px;height:14px;line-height:14px;font-size:10px;letter-spacing:-0.501px;left:690.95px;width:600px;text-align:center;">1.8</div>
<div class="t ax" style="top:978.00px;height:14px;line-height:14px;font-size:10px;letter-spacing:-0.501px;left:732.15px;width:600px;text-align:center;">2.0</div>
<div class="t ax" style="top:978.00px;height:14px;line-height:14px;font-size:10px;letter-spacing:-0.501px;left:773.35px;width:600px;text-align:center;">2.2</div>
<div class="t ax" style="top:978.00px;height:14px;line-height:14px;font-size:10px;letter-spacing:-0.501px;left:814.55px;width:600px;text-align:center;">2.4</div>
<div class="t ax" style="top:978.00px;height:14px;line-height:14px;font-size:10px;letter-spacing:-0.501px;left:855.65px;width:600px;text-align:center;">2.6</div>
<div class="t ax" style="top:978.00px;height:14px;line-height:14px;font-size:10px;letter-spacing:-0.501px;left:896.85px;width:600px;text-align:center;">2.8</div>
<div class="t ax" style="top:978.00px;height:14px;line-height:14px;font-size:10px;letter-spacing:-0.501px;left:938.05px;width:600px;text-align:center;">3.0</div>
<div class="t ax" style="top:978.00px;height:14px;line-height:14px;font-size:10px;letter-spacing:-0.501px;left:979.25px;width:600px;text-align:center;">3.2</div>
<div class="t ax" style="top:978.00px;height:14px;line-height:14px;font-size:10px;color:#eef6ff;letter-spacing:-0.501px;left:1020.45px;width:600px;text-align:center;">3.4</div>
<div class="t ax" style="top:978.00px;height:14px;line-height:14px;font-size:10px;color:#eef6ff;letter-spacing:-0.501px;left:1061.55px;width:600px;text-align:center;">3.6</div>
<div class="t ax" style="top:978.00px;height:14px;line-height:14px;font-size:10px;color:#eef6ff;letter-spacing:-0.501px;left:1102.75px;width:600px;text-align:center;">3.8</div>
<div class="t ax" style="top:978.00px;height:14px;line-height:14px;font-size:10px;color:#eef6ff;letter-spacing:-0.501px;left:1143.95px;width:600px;text-align:center;">4.0</div>
<div class="t ax" style="top:978.00px;height:14px;line-height:14px;font-size:10px;letter-spacing:-0.501px;left:1185.15px;width:600px;text-align:center;">4.2</div>
<div class="t ax" style="top:978.00px;height:14px;line-height:14px;font-size:10px;letter-spacing:-0.501px;left:1226.35px;width:600px;text-align:center;">4.4</div>
<div class="t ax" style="top:978.00px;height:14px;line-height:14px;font-size:10px;letter-spacing:-0.501px;left:1267.45px;width:600px;text-align:center;">4.6</div>
<div class="t ax" style="top:978.00px;height:14px;line-height:14px;font-size:10px;letter-spacing:-0.501px;left:1308.65px;width:600px;text-align:center;">4.8</div>
<div class="t ax" style="top:978.00px;height:14px;line-height:14px;font-size:10px;letter-spacing:-0.501px;left:1349.85px;width:600px;text-align:center;">5.0</div>
<div class="t ax" style="top:978.00px;height:14px;line-height:14px;font-size:10px;letter-spacing:-0.501px;left:1391.05px;width:600px;text-align:center;">5.2</div>
<div class="t ax" style="top:978.00px;height:14px;line-height:14px;font-size:10px;letter-spacing:-0.501px;left:1432.25px;width:600px;text-align:center;">5.4</div>
<div class="t ax" style="top:978.00px;height:14px;line-height:14px;font-size:10px;letter-spacing:-0.501px;left:1473.35px;width:600px;text-align:center;">5.6</div>
<div class="t ax" style="top:978.00px;height:14px;line-height:14px;font-size:10px;letter-spacing:-0.501px;left:1514.55px;width:600px;text-align:center;">5.8</div>
<div style="left:627px;top:991px;width:1198px;height:17px;background:#f0f0f0;"></div>
<svg style="left:632px;top:996px" width="5" height="8" viewBox="0 0 5 8"><path d="M4.5 0.5L1 4L4.5 7.5" stroke="#c8c8c8" stroke-width="1" fill="none"/></svg>
<svg style="left:1814px;top:996px" width="5" height="8" viewBox="0 0 5 8"><path d="M0.5 0.5L4 4L0.5 7.5" stroke="#c8c8c8" stroke-width="1" fill="none"/></svg>
<div class="t lb" style="top:964.30px;height:16px;line-height:16px;font-size:12px;letter-spacing:-0.396px;right:1346.9px;text-align:right;">Start:</div>
<div class="t mono" style="top:964.55px;height:15.5px;line-height:15.5px;font-size:11.5px;letter-spacing:-0.951px;left:547px;">0.027688076s</div>
<div class="t lb" style="top:979.30px;height:16px;line-height:16px;font-size:12px;letter-spacing:-0.597px;right:1347.1px;text-align:right;">End:</div>
<div class="t mono" style="top:979.55px;height:15.5px;line-height:15.5px;font-size:11.5px;letter-spacing:-0.951px;left:547px;">5.844467100s</div>
<div class="t lb" style="top:994.20px;height:16px;line-height:16px;font-size:12px;letter-spacing:-0.055px;right:1346.56px;text-align:right;">Duration:</div>
<div class="t mono" style="top:994.45px;height:15.5px;line-height:15.5px;font-size:11.5px;letter-spacing:-0.951px;left:547px;">5.816779024s</div>
<div style="left:1865px;top:51px;width:22px;height:98.5px;border:1px solid #acacac;background:#fff;"></div>
<div class="t vt" style="left:1865px;top:51px;width:98.5px;height:22px;line-height:22px;font-size:12px;letter-spacing:-0.197px;padding-left:3.5px;transform-origin:0 0;transform:translate(21px,0) rotate(90deg);">Analysis Assistant</div>
<div style="left:1865px;top:155px;width:22px;height:40.5px;border:1px solid #acacac;background:#fff;"></div>
<div class="t vt" style="left:1865px;top:155px;width:40.5px;height:22px;line-height:22px;font-size:12px;letter-spacing:-0.383px;padding-left:3.5px;transform-origin:0 0;transform:translate(21px,0) rotate(90deg);">Details</div>
</body></html>
